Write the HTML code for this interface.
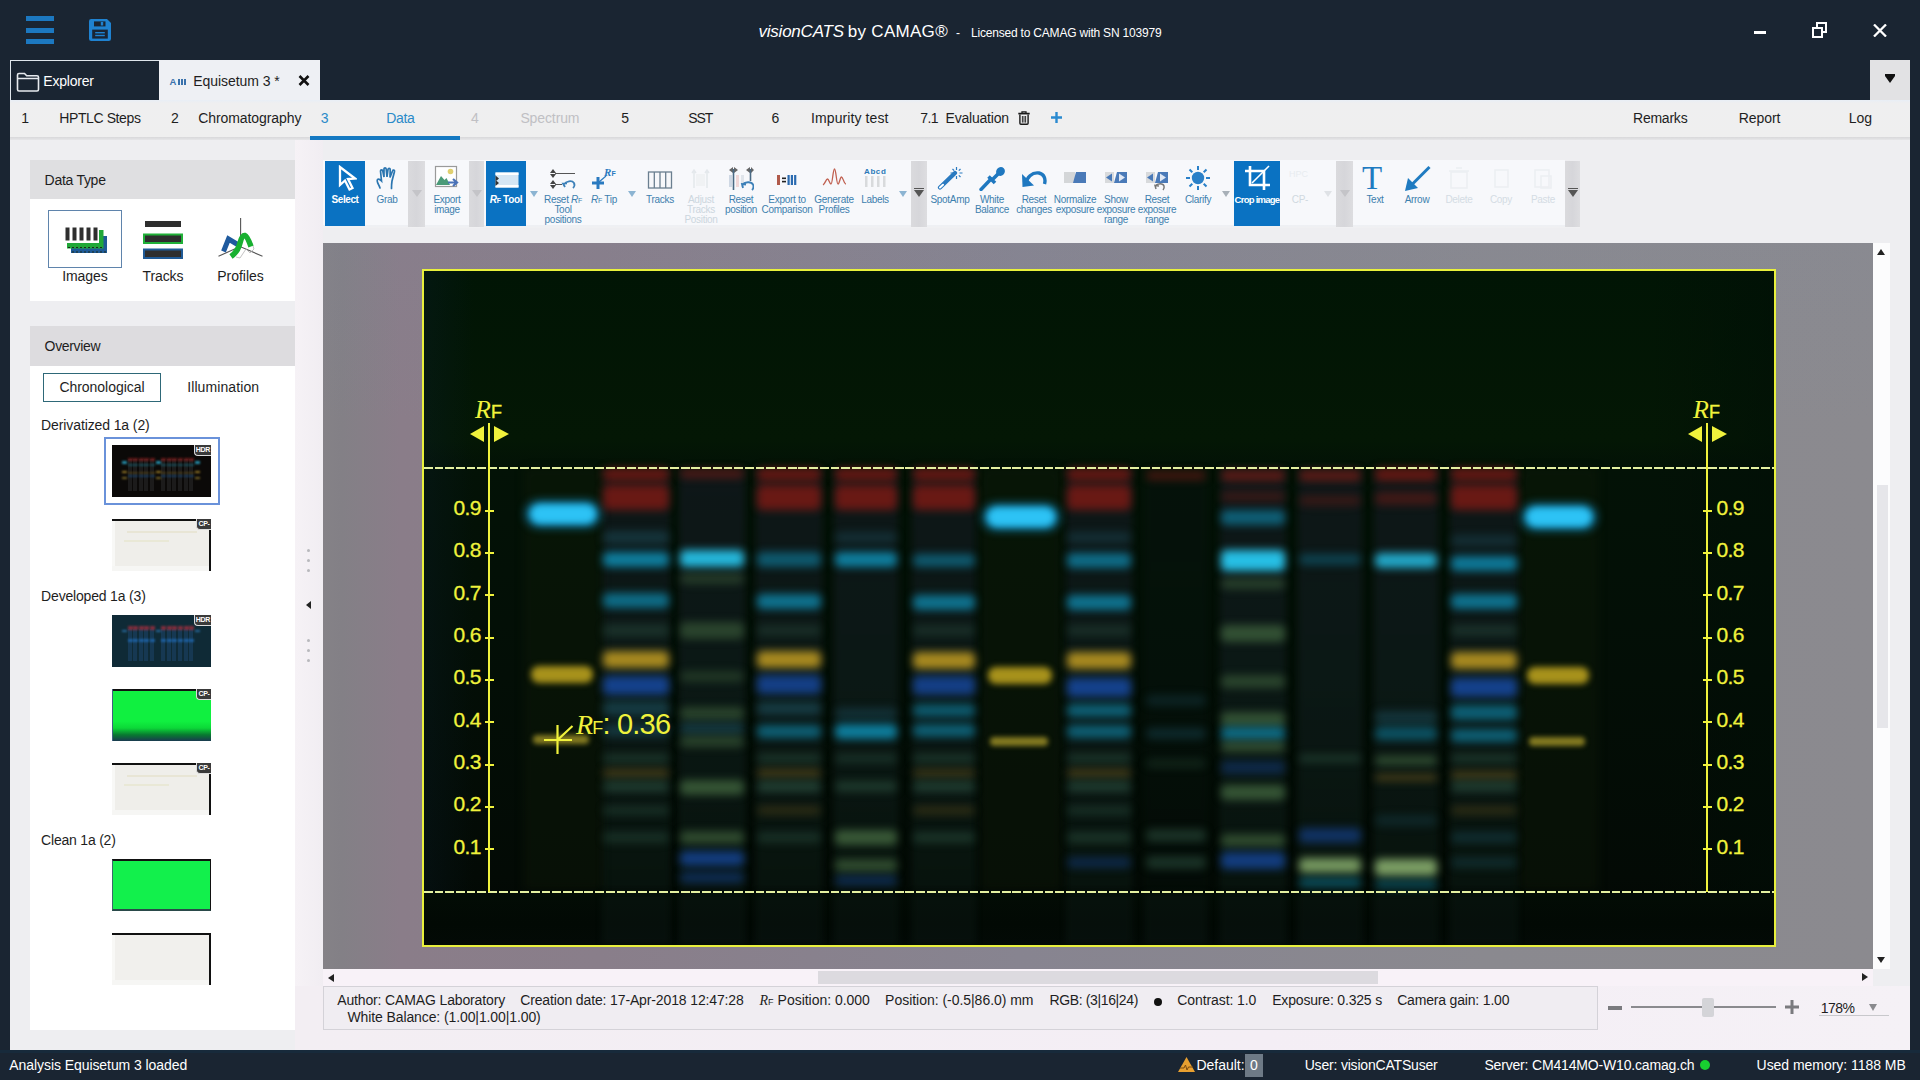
<!DOCTYPE html>
<html><head><meta charset="utf-8">
<style>
*{box-sizing:border-box;margin:0;padding:0}
html,body{width:1920px;height:1080px;overflow:hidden}
body{position:relative;background:#1a2532;font-family:"Liberation Sans",sans-serif;color:#1e1e1e}
.a{position:absolute}
.t{position:absolute;white-space:nowrap}
</style></head><body>
<div class="a" style="left:26px;top:16px;width:28px;height:5px;background:#1c78c0"></div>
<div class="a" style="left:26px;top:28px;width:28px;height:5px;background:#1c78c0"></div>
<div class="a" style="left:26px;top:39px;width:28px;height:5px;background:#1c78c0"></div>
<svg class="a" style="left:88px;top:18px" width="24" height="24" viewBox="0 0 24 24">
<path d="M3.2 1H19L23 5V20.8Q23 23 20.8 23H3.2Q1 23 1 20.8V3.2Q1 1 3.2 1Z" fill="#1f82d0"/>
<rect x="6" y="3.4" width="11.5" height="5" fill="#1a2532"/>
<rect x="12.8" y="3.9" width="2.4" height="3.6" fill="#1f82d0"/>
<rect x="4.2" y="11.6" width="15.6" height="9" fill="#1a2532"/>
<rect x="7.2" y="14" width="9.6" height="1.4" fill="#1f82d0"/><rect x="7.2" y="16.8" width="9.6" height="1.4" fill="#1f82d0"/>
</svg>
<div class="t" style="left:758.5px;top:22.5px;font-size:17px;line-height:1;letter-spacing:-0.23px;color:#fff;"><i>visionCATS</i></div>
<div class="t" style="left:847.8px;top:22.5px;font-size:17px;line-height:1;letter-spacing:0.29px;color:#fff;">by CAMAG®</div>
<div class="t" style="left:956.0px;top:26.7px;font-size:12px;line-height:1;letter-spacing:0.00px;color:#fff;">-</div>
<div class="t" style="left:971.0px;top:26.7px;font-size:12px;line-height:1;letter-spacing:-0.20px;color:#fff;">Licensed to CAMAG with SN 103979</div>
<div class="a" style="left:1754px;top:31px;width:12px;height:3px;background:#fff"></div>
<svg class="a" style="left:1812px;top:21px" width="16" height="17" viewBox="0 0 16 17">
<rect x="1" y="7" width="9" height="9" fill="none" stroke="#fff" stroke-width="2"/>
<path d="M5 6V2H14V11H11" fill="none" stroke="#fff" stroke-width="2"/></svg>
<svg class="a" style="left:1873px;top:24px" width="14" height="13" viewBox="0 0 14 13">
<path d="M1 0.5L13 12.5M13 0.5L1 12.5" stroke="#fff" stroke-width="2.3"/></svg>
<div class="a" style="left:10px;top:60px;width:149px;height:40px;background:#1a2532;border-top:1px solid #dfe6ec;border-left:1px solid #dfe6ec"></div>
<svg class="a" style="left:16px;top:72px" width="24" height="20" viewBox="0 0 24 20">
<path d="M1.5 17.5V3q0-1.5 1.5-1.5h5.5l2.2 2.3h10.3q1.5 0 1.5 1.5v12.2q0 1.5-1.5 1.5H3q-1.5 0-1.5-1.5zM1.5 6.5h20.5" fill="none" stroke="#e6eaee" stroke-width="1.6"/></svg>
<div class="t" style="left:43.3px;top:73.7px;font-size:14px;line-height:1;letter-spacing:-0.20px;color:#fff;">Explorer</div>
<div class="a" style="left:159px;top:60px;width:161px;height:40px;background:#eef0f4"></div>
<svg class="a" style="left:169px;top:77px" width="18" height="9" viewBox="0 0 18 9"><text x="0.5" y="8" font-family="Liberation Sans" font-weight="bold" font-size="9.5" fill="#3a72ac">A</text><rect x="9" y="2" width="2" height="6" fill="#3a72ac"/><rect x="12" y="2" width="2" height="6" fill="#3a72ac"/><rect x="15" y="2" width="2" height="6" fill="#3a72ac"/></svg>
<div class="t" style="left:193.3px;top:73.7px;font-size:14px;line-height:1;letter-spacing:-0.07px;color:#1e1e1e;">Equisetum 3 *</div>
<svg class="a" style="left:298px;top:75px" width="12" height="11" viewBox="0 0 12 11"><path d="M1.5 1L10.5 10M10.5 1L1.5 10" stroke="#111" stroke-width="2.6"/></svg>
<div class="a" style="left:1870px;top:60px;width:40px;height:40px;background:#e2e2e4"></div>
<div class="a" style="left:1885px;top:74px;width:10px;height:1.5px;background:#111"></div>
<div class="a" style="left:1885px;top:76px;width:0;height:0;border-left:5px solid transparent;border-right:5px solid transparent;border-top:7px solid #111"></div>
<div class="a" style="left:10px;top:100px;width:1900px;height:950px;background:#eeeef1"></div>
<div class="a" style="left:10px;top:100px;width:1900px;height:37px;background:linear-gradient(180deg,#e8eef6 0,#efeff0 3px,#efefef 100%)"></div>
<div class="a" style="left:295px;top:140px;width:28px;height:910px;background:linear-gradient(90deg,#f6f2f6,#f1edf2)"></div>
<div class="a" style="left:295px;top:986px;width:1615px;height:64px;background:linear-gradient(90deg,#f3eef3,#f4eef5 60%,#f5f1f6)"></div>
<div class="a" style="left:10px;top:137px;width:1900px;height:3px;background:linear-gradient(180deg,#d8d8da,#e6e6e8)"></div>
<div class="a" style="left:310px;top:136px;width:150px;height:4px;background:#1479c2"></div>
<div class="t" style="left:21.3px;top:110.8px;font-size:14px;line-height:1;letter-spacing:-1.58px;color:#1e1e1e;">1</div>
<div class="t" style="left:59.3px;top:110.8px;font-size:14px;line-height:1;letter-spacing:-0.40px;color:#1e1e1e;">HPTLC Steps</div>
<div class="t" style="left:171.0px;top:110.8px;font-size:14px;line-height:1;letter-spacing:-0.08px;color:#1e1e1e;">2</div>
<div class="t" style="left:198.3px;top:110.8px;font-size:14px;line-height:1;letter-spacing:-0.09px;color:#1e1e1e;">Chromatography</div>
<div class="t" style="left:320.8px;top:110.8px;font-size:14px;line-height:1;letter-spacing:-0.28px;color:#2a8ac8;">3</div>
<div class="t" style="left:386.3px;top:110.8px;font-size:14px;line-height:1;letter-spacing:-0.39px;color:#2a8ac8;">Data</div>
<div class="t" style="left:470.9px;top:110.8px;font-size:14px;line-height:1;letter-spacing:0.12px;color:#c0c0c4;">4</div>
<div class="t" style="left:520.4px;top:110.8px;font-size:14px;line-height:1;letter-spacing:-0.11px;color:#c0c0c4;">Spectrum</div>
<div class="t" style="left:621.3px;top:110.8px;font-size:14px;line-height:1;letter-spacing:-0.28px;color:#1e1e1e;">5</div>
<div class="t" style="left:688.2px;top:110.8px;font-size:14px;line-height:1;letter-spacing:-1.01px;color:#1e1e1e;">SST</div>
<div class="t" style="left:771.4px;top:110.8px;font-size:14px;line-height:1;letter-spacing:-0.68px;color:#1e1e1e;">6</div>
<div class="t" style="left:811.0px;top:110.8px;font-size:14px;line-height:1;letter-spacing:0.10px;color:#1e1e1e;">Impurity test</div>
<div class="t" style="left:920.2px;top:110.8px;font-size:14px;line-height:1;letter-spacing:-0.55px;color:#1e1e1e;">7.1</div>
<div class="t" style="left:945.5px;top:110.8px;font-size:14px;line-height:1;letter-spacing:-0.20px;color:#1e1e1e;">Evaluation</div>
<svg class="a" style="left:1018px;top:111px" width="12" height="14" viewBox="0 0 12 14">
<path d="M4 2.2V0.9H8V2.2" fill="none" stroke="#1a1a1a" stroke-width="1.3"/>
<path d="M0.3 2.6H11.7" stroke="#1a1a1a" stroke-width="1.7"/>
<path d="M1.9 3.6V12.3Q1.9 13.3 2.9 13.3H9.1Q10.1 13.3 10.1 12.3V3.6" fill="none" stroke="#1a1a1a" stroke-width="1.4"/>
<path d="M4.4 5V11.6M6 5V11.6M7.6 5V11.6" stroke="#1a1a1a" stroke-width="0.9"/></svg>
<svg class="a" style="left:1050px;top:111px" width="13" height="13" viewBox="0 0 13 13"><path d="M6.5 1V12M1 6.5H12" stroke="#2a8ad0" stroke-width="2.4"/></svg>
<div class="t" style="left:1633.0px;top:110.8px;font-size:14px;line-height:1;letter-spacing:-0.23px;color:#1e1e1e;">Remarks</div>
<div class="t" style="left:1738.8px;top:110.8px;font-size:14px;line-height:1;letter-spacing:-0.07px;color:#1e1e1e;">Report</div>
<div class="t" style="left:1848.7px;top:110.8px;font-size:14px;line-height:1;letter-spacing:-0.01px;color:#1e1e1e;">Log</div>
<div class="a" style="left:30px;top:160px;width:265px;height:39px;background:#dfdfe1"></div>
<div class="t" style="left:44.6px;top:172.7px;font-size:14px;line-height:1;letter-spacing:-0.28px;color:#1e1e1e;">Data Type</div>
<div class="a" style="left:30px;top:199px;width:265px;height:102px;background:#fff"></div>
<div class="a" style="left:48px;top:210px;width:74px;height:58px;border:1px solid #5f84ac"></div>
<div class="t" style="left:62.2px;top:268.7px;font-size:14px;line-height:1;letter-spacing:-0.08px;color:#1e1e1e;">Images</div>
<div class="t" style="left:142.6px;top:268.7px;font-size:14px;line-height:1;letter-spacing:-0.13px;color:#1e1e1e;">Tracks</div>
<div class="t" style="left:217.3px;top:268.7px;font-size:14px;line-height:1;letter-spacing:-0.03px;color:#1e1e1e;">Profiles</div>
<div class="a" style="left:30px;top:326px;width:265px;height:40px;background:#dddcdf"></div>
<div class="t" style="left:44.6px;top:339.3px;font-size:14px;line-height:1;letter-spacing:-0.33px;color:#1e1e1e;">Overview</div>
<div class="a" style="left:30px;top:366px;width:265px;height:664px;background:#fff"></div>
<div class="a" style="left:43px;top:373px;width:118px;height:29px;border:1.3px solid #2e6878"></div>
<div class="t" style="left:59.4px;top:380.0px;font-size:14px;line-height:1;letter-spacing:-0.04px;color:#1e1e1e;">Chronological</div>
<div class="t" style="left:187.2px;top:380.0px;font-size:14px;line-height:1;letter-spacing:0.10px;color:#1e1e1e;">Illumination</div>
<div class="t" style="left:41.1px;top:417.8px;font-size:14px;line-height:1;letter-spacing:-0.11px;color:#1e1e1e;">Derivatized 1a (2)</div>
<div class="t" style="left:41.1px;top:588.8px;font-size:14px;line-height:1;letter-spacing:-0.18px;color:#1e1e1e;">Developed 1a (3)</div>
<div class="t" style="left:41.1px;top:832.9px;font-size:14px;line-height:1;letter-spacing:-0.21px;color:#1e1e1e;">Clean 1a (2)</div>
<svg class="a" style="left:60px;top:222px" width="52" height="36" viewBox="60 222 52 36">
<rect x="71" y="236" width="36" height="17" fill="#1f5a96"/>
<rect x="67" y="230" width="36.5" height="18.5" fill="#20a838"/>
<rect x="65" y="227" width="34" height="16" fill="#fff"/>
<path d="M68 247.5H103M72 252H106" stroke="#1a2a1a" stroke-width="1" stroke-dasharray="2 2"/>
<rect x="65.5" y="227.5" width="4" height="13" fill="#2e2e2e"/>
<rect x="72.5" y="227.5" width="4" height="13" fill="#2e2e2e"/>
<rect x="79.5" y="227.5" width="4" height="13" fill="#2e2e2e"/>
<rect x="86.5" y="227.5" width="4" height="13" fill="#2e2e2e"/>
<rect x="93.5" y="227.5" width="4" height="13" fill="#2e2e2e"/>
</svg>
<svg class="a" style="left:140px;top:218px" width="46" height="44" viewBox="140 218 46 44">
<rect x="145" y="221" width="36" height="6" fill="#2e2e2e"/>
<rect x="143" y="233.5" width="40" height="10.5" fill="#20b038"/>
<rect x="145" y="235.5" width="36" height="6.5" fill="#2e2e2e"/>
<rect x="143" y="248.5" width="40" height="10.5" fill="#1f5a96"/>
<rect x="145" y="250.5" width="36" height="6.5" fill="#2e2e2e"/>
</svg>
<svg class="a" style="left:214px;top:214px" width="52" height="48" viewBox="214 214 52 48">
<path d="M240.6 218V246M218.5 256.3L240 246.5L262.5 256.3" fill="none" stroke="#555" stroke-width="1.1"/>
<path d="M248 247 L252 243 L254 249 L250 253 L246 249 L240 258 L236 257" fill="none" stroke="#aaa" stroke-width="0.7"/>
<path d="M223.5 251.5 L228.5 239 L238.5 245" fill="none" stroke="#1f5a9e" stroke-width="5" stroke-linejoin="miter"/>
<path d="M231 256.5 C236 253 238.5 249 240 243 C241.5 237 243 235 245 235.5 C247 236 249 241 251 246.5" fill="none" stroke="#18b030" stroke-width="5.5" stroke-linejoin="round"/>
</svg>
<div class="a" style="left:307px;top:549px;width:3px;height:3px;border-radius:50%;background:#b8b8bc"></div>
<div class="a" style="left:307px;top:559px;width:3px;height:3px;border-radius:50%;background:#b8b8bc"></div>
<div class="a" style="left:307px;top:569px;width:3px;height:3px;border-radius:50%;background:#b8b8bc"></div>
<div class="a" style="left:307px;top:639px;width:3px;height:3px;border-radius:50%;background:#b8b8bc"></div>
<div class="a" style="left:307px;top:649px;width:3px;height:3px;border-radius:50%;background:#b8b8bc"></div>
<div class="a" style="left:307px;top:659px;width:3px;height:3px;border-radius:50%;background:#b8b8bc"></div>
<div class="a" style="left:306px;top:601px;width:0;height:0;border-top:4px solid transparent;border-bottom:4px solid transparent;border-right:5px solid #222"></div>
<div class="a" style="left:104px;top:437px;width:116px;height:68px;border:2px solid #6a92da"></div>
<div class="a" style="left:112px;top:445px;width:99px;height:52px;background:#0b0908;overflow:hidden">
<div class="a" style="left:15.6px;top:14px;width:4px;height:32px;background:rgba(40,40,40,.6);filter:blur(0.6px)"></div>
<div class="a" style="left:21.2px;top:14px;width:4px;height:32px;background:rgba(40,40,40,.6);filter:blur(0.6px)"></div>
<div class="a" style="left:26.8px;top:14px;width:4px;height:32px;background:rgba(40,40,40,.6);filter:blur(0.6px)"></div>
<div class="a" style="left:32.4px;top:14px;width:4px;height:32px;background:rgba(40,40,40,.6);filter:blur(0.6px)"></div>
<div class="a" style="left:38.0px;top:14px;width:4px;height:32px;background:rgba(40,40,40,.6);filter:blur(0.6px)"></div>
<div class="a" style="left:49.2px;top:14px;width:4px;height:32px;background:rgba(40,40,40,.6);filter:blur(0.6px)"></div>
<div class="a" style="left:54.8px;top:14px;width:4px;height:32px;background:rgba(40,40,40,.6);filter:blur(0.6px)"></div>
<div class="a" style="left:60.4px;top:14px;width:4px;height:32px;background:rgba(40,40,40,.6);filter:blur(0.6px)"></div>
<div class="a" style="left:66.0px;top:14px;width:4px;height:32px;background:rgba(40,40,40,.6);filter:blur(0.6px)"></div>
<div class="a" style="left:71.6px;top:14px;width:4px;height:32px;background:rgba(40,40,40,.6);filter:blur(0.6px)"></div>
<div class="a" style="left:77.2px;top:14px;width:4px;height:32px;background:rgba(40,40,40,.6);filter:blur(0.6px)"></div>
<div class="a" style="left:10.0px;top:16px;width:5px;height:2.5px;background:#30c0e8;opacity:.7;filter:blur(0.9px)"></div>
<div class="a" style="left:10.0px;top:26px;width:5px;height:2px;background:#c8a030;opacity:.7;filter:blur(0.9px)"></div>
<div class="a" style="left:10.0px;top:32px;width:5px;height:1.5px;background:#a08830;opacity:.7;filter:blur(0.9px)"></div>
<div class="a" style="left:15.6px;top:13px;width:5px;height:3px;background:#8a2020;opacity:.7;filter:blur(0.9px)"></div>
<div class="a" style="left:15.6px;top:19px;width:5px;height:2px;background:#186070;opacity:.7;filter:blur(0.9px)"></div>
<div class="a" style="left:15.6px;top:27px;width:5px;height:2px;background:#5a4818;opacity:.7;filter:blur(0.9px)"></div>
<div class="a" style="left:15.6px;top:30px;width:5px;height:2px;background:#184878;opacity:.7;filter:blur(0.9px)"></div>
<div class="a" style="left:21.2px;top:13px;width:5px;height:3px;background:#8a2020;opacity:.7;filter:blur(0.9px)"></div>
<div class="a" style="left:21.2px;top:19px;width:5px;height:2px;background:#186070;opacity:.7;filter:blur(0.9px)"></div>
<div class="a" style="left:21.2px;top:27px;width:5px;height:2px;background:#5a4818;opacity:.7;filter:blur(0.9px)"></div>
<div class="a" style="left:21.2px;top:30px;width:5px;height:2px;background:#184878;opacity:.7;filter:blur(0.9px)"></div>
<div class="a" style="left:26.799999999999997px;top:13px;width:5px;height:3px;background:#8a2020;opacity:.7;filter:blur(0.9px)"></div>
<div class="a" style="left:26.799999999999997px;top:19px;width:5px;height:2px;background:#186070;opacity:.7;filter:blur(0.9px)"></div>
<div class="a" style="left:26.799999999999997px;top:27px;width:5px;height:2px;background:#5a4818;opacity:.7;filter:blur(0.9px)"></div>
<div class="a" style="left:26.799999999999997px;top:30px;width:5px;height:2px;background:#184878;opacity:.7;filter:blur(0.9px)"></div>
<div class="a" style="left:32.4px;top:13px;width:5px;height:3px;background:#8a2020;opacity:.7;filter:blur(0.9px)"></div>
<div class="a" style="left:32.4px;top:19px;width:5px;height:2px;background:#186070;opacity:.7;filter:blur(0.9px)"></div>
<div class="a" style="left:32.4px;top:27px;width:5px;height:2px;background:#5a4818;opacity:.7;filter:blur(0.9px)"></div>
<div class="a" style="left:32.4px;top:30px;width:5px;height:2px;background:#184878;opacity:.7;filter:blur(0.9px)"></div>
<div class="a" style="left:38.0px;top:13px;width:5px;height:3px;background:#8a2020;opacity:.7;filter:blur(0.9px)"></div>
<div class="a" style="left:38.0px;top:19px;width:5px;height:2px;background:#186070;opacity:.7;filter:blur(0.9px)"></div>
<div class="a" style="left:38.0px;top:27px;width:5px;height:2px;background:#5a4818;opacity:.7;filter:blur(0.9px)"></div>
<div class="a" style="left:38.0px;top:30px;width:5px;height:2px;background:#184878;opacity:.7;filter:blur(0.9px)"></div>
<div class="a" style="left:43.599999999999994px;top:16px;width:5px;height:2.5px;background:#30c0e8;opacity:.7;filter:blur(0.9px)"></div>
<div class="a" style="left:43.599999999999994px;top:26px;width:5px;height:2px;background:#c8a030;opacity:.7;filter:blur(0.9px)"></div>
<div class="a" style="left:43.599999999999994px;top:32px;width:5px;height:1.5px;background:#a08830;opacity:.7;filter:blur(0.9px)"></div>
<div class="a" style="left:49.199999999999996px;top:13px;width:5px;height:3px;background:#8a2020;opacity:.7;filter:blur(0.9px)"></div>
<div class="a" style="left:49.199999999999996px;top:19px;width:5px;height:2px;background:#186070;opacity:.7;filter:blur(0.9px)"></div>
<div class="a" style="left:49.199999999999996px;top:27px;width:5px;height:2px;background:#5a4818;opacity:.7;filter:blur(0.9px)"></div>
<div class="a" style="left:49.199999999999996px;top:30px;width:5px;height:2px;background:#184878;opacity:.7;filter:blur(0.9px)"></div>
<div class="a" style="left:54.8px;top:13px;width:5px;height:3px;background:#8a2020;opacity:.7;filter:blur(0.9px)"></div>
<div class="a" style="left:54.8px;top:19px;width:5px;height:2px;background:#186070;opacity:.7;filter:blur(0.9px)"></div>
<div class="a" style="left:54.8px;top:27px;width:5px;height:2px;background:#5a4818;opacity:.7;filter:blur(0.9px)"></div>
<div class="a" style="left:54.8px;top:30px;width:5px;height:2px;background:#184878;opacity:.7;filter:blur(0.9px)"></div>
<div class="a" style="left:60.4px;top:13px;width:5px;height:3px;background:#8a2020;opacity:.7;filter:blur(0.9px)"></div>
<div class="a" style="left:60.4px;top:19px;width:5px;height:2px;background:#186070;opacity:.7;filter:blur(0.9px)"></div>
<div class="a" style="left:60.4px;top:27px;width:5px;height:2px;background:#5a4818;opacity:.7;filter:blur(0.9px)"></div>
<div class="a" style="left:60.4px;top:30px;width:5px;height:2px;background:#184878;opacity:.7;filter:blur(0.9px)"></div>
<div class="a" style="left:66.0px;top:13px;width:5px;height:3px;background:#8a2020;opacity:.7;filter:blur(0.9px)"></div>
<div class="a" style="left:66.0px;top:19px;width:5px;height:2px;background:#186070;opacity:.7;filter:blur(0.9px)"></div>
<div class="a" style="left:66.0px;top:27px;width:5px;height:2px;background:#5a4818;opacity:.7;filter:blur(0.9px)"></div>
<div class="a" style="left:66.0px;top:30px;width:5px;height:2px;background:#184878;opacity:.7;filter:blur(0.9px)"></div>
<div class="a" style="left:71.6px;top:13px;width:5px;height:3px;background:#8a2020;opacity:.7;filter:blur(0.9px)"></div>
<div class="a" style="left:71.6px;top:19px;width:5px;height:2px;background:#186070;opacity:.7;filter:blur(0.9px)"></div>
<div class="a" style="left:71.6px;top:27px;width:5px;height:2px;background:#5a4818;opacity:.7;filter:blur(0.9px)"></div>
<div class="a" style="left:71.6px;top:30px;width:5px;height:2px;background:#184878;opacity:.7;filter:blur(0.9px)"></div>
<div class="a" style="left:77.19999999999999px;top:13px;width:5px;height:3px;background:#8a2020;opacity:.7;filter:blur(0.9px)"></div>
<div class="a" style="left:77.19999999999999px;top:19px;width:5px;height:2px;background:#186070;opacity:.7;filter:blur(0.9px)"></div>
<div class="a" style="left:77.19999999999999px;top:27px;width:5px;height:2px;background:#5a4818;opacity:.7;filter:blur(0.9px)"></div>
<div class="a" style="left:77.19999999999999px;top:30px;width:5px;height:2px;background:#184878;opacity:.7;filter:blur(0.9px)"></div>
<div class="a" style="left:82.8px;top:16px;width:5px;height:2.5px;background:#30c0e8;opacity:.7;filter:blur(0.9px)"></div>
<div class="a" style="left:82.8px;top:26px;width:5px;height:2px;background:#c8a030;opacity:.7;filter:blur(0.9px)"></div>
<div class="a" style="left:82.8px;top:32px;width:5px;height:1.5px;background:#a08830;opacity:.7;filter:blur(0.9px)"></div>
</div>
<div class="a" style="left:194px;top:445px;width:17px;height:11px;background:#3a3a3a;border-bottom-left-radius:4px;border:1px solid #ddd;border-top:none;border-right:none;color:#fff;font-size:7px;font-weight:bold;line-height:10px;text-align:center;letter-spacing:-0.3px">HDR</div>
<div class="a" style="left:112px;top:519px;width:99px;height:52px;background:#efeeea;border-top:2px solid #111;border-right:2px solid #111;"></div>
<div class="a" style="left:112px;top:521px;width:3px;height:50px;background:#f8f8f6"></div>
<div class="a" style="left:112px;top:566px;width:97px;height:5px;background:#f6f6f4"></div>
<div class="a" style="left:127px;top:531px;width:70px;height:2px;background:rgba(200,190,120,.18);filter:blur(0.5px)"></div>
<div class="a" style="left:124px;top:540px;width:45px;height:2px;background:rgba(200,200,100,.15);filter:blur(0.5px)"></div>
<div class="a" style="left:196px;top:519px;width:15px;height:11px;background:#3a3a3a;border-bottom-left-radius:4px;border:1px solid #ddd;border-top:none;border-right:none;color:#fff;font-size:7px;font-weight:bold;line-height:10px;text-align:center;letter-spacing:-0.3px">CP-</div>
<div class="a" style="left:112px;top:615px;width:99px;height:52px;background:#0f2a36;overflow:hidden">
<div class="a" style="left:15.6px;top:14px;width:4px;height:32px;background:rgba(30,70,110,.5);filter:blur(0.6px)"></div>
<div class="a" style="left:21.2px;top:14px;width:4px;height:32px;background:rgba(30,70,110,.5);filter:blur(0.6px)"></div>
<div class="a" style="left:26.8px;top:14px;width:4px;height:32px;background:rgba(30,70,110,.5);filter:blur(0.6px)"></div>
<div class="a" style="left:32.4px;top:14px;width:4px;height:32px;background:rgba(30,70,110,.5);filter:blur(0.6px)"></div>
<div class="a" style="left:38.0px;top:14px;width:4px;height:32px;background:rgba(30,70,110,.5);filter:blur(0.6px)"></div>
<div class="a" style="left:49.2px;top:14px;width:4px;height:32px;background:rgba(30,70,110,.5);filter:blur(0.6px)"></div>
<div class="a" style="left:54.8px;top:14px;width:4px;height:32px;background:rgba(30,70,110,.5);filter:blur(0.6px)"></div>
<div class="a" style="left:60.4px;top:14px;width:4px;height:32px;background:rgba(30,70,110,.5);filter:blur(0.6px)"></div>
<div class="a" style="left:66.0px;top:14px;width:4px;height:32px;background:rgba(30,70,110,.5);filter:blur(0.6px)"></div>
<div class="a" style="left:71.6px;top:14px;width:4px;height:32px;background:rgba(30,70,110,.5);filter:blur(0.6px)"></div>
<div class="a" style="left:77.2px;top:14px;width:4px;height:32px;background:rgba(30,70,110,.5);filter:blur(0.6px)"></div>
<div class="a" style="left:10.0px;top:15px;width:5px;height:1.5px;background:#3080c0;opacity:.7;filter:blur(0.9px)"></div>
<div class="a" style="left:15.6px;top:11px;width:5px;height:4px;background:#b03040;opacity:.7;filter:blur(0.9px)"></div>
<div class="a" style="left:15.6px;top:24px;width:5px;height:3px;background:#2070c0;opacity:.7;filter:blur(0.9px)"></div>
<div class="a" style="left:21.2px;top:11px;width:5px;height:4px;background:#b03040;opacity:.7;filter:blur(0.9px)"></div>
<div class="a" style="left:21.2px;top:24px;width:5px;height:3px;background:#2070c0;opacity:.7;filter:blur(0.9px)"></div>
<div class="a" style="left:26.799999999999997px;top:11px;width:5px;height:4px;background:#b03040;opacity:.7;filter:blur(0.9px)"></div>
<div class="a" style="left:26.799999999999997px;top:24px;width:5px;height:3px;background:#2070c0;opacity:.7;filter:blur(0.9px)"></div>
<div class="a" style="left:32.4px;top:11px;width:5px;height:4px;background:#b03040;opacity:.7;filter:blur(0.9px)"></div>
<div class="a" style="left:32.4px;top:24px;width:5px;height:3px;background:#2070c0;opacity:.7;filter:blur(0.9px)"></div>
<div class="a" style="left:38.0px;top:11px;width:5px;height:4px;background:#b03040;opacity:.7;filter:blur(0.9px)"></div>
<div class="a" style="left:38.0px;top:24px;width:5px;height:3px;background:#2070c0;opacity:.7;filter:blur(0.9px)"></div>
<div class="a" style="left:43.599999999999994px;top:15px;width:5px;height:1.5px;background:#3080c0;opacity:.7;filter:blur(0.9px)"></div>
<div class="a" style="left:49.199999999999996px;top:11px;width:5px;height:4px;background:#b03040;opacity:.7;filter:blur(0.9px)"></div>
<div class="a" style="left:49.199999999999996px;top:24px;width:5px;height:3px;background:#2070c0;opacity:.7;filter:blur(0.9px)"></div>
<div class="a" style="left:54.8px;top:11px;width:5px;height:4px;background:#b03040;opacity:.7;filter:blur(0.9px)"></div>
<div class="a" style="left:54.8px;top:24px;width:5px;height:3px;background:#2070c0;opacity:.7;filter:blur(0.9px)"></div>
<div class="a" style="left:60.4px;top:11px;width:5px;height:4px;background:#b03040;opacity:.7;filter:blur(0.9px)"></div>
<div class="a" style="left:60.4px;top:24px;width:5px;height:3px;background:#2070c0;opacity:.7;filter:blur(0.9px)"></div>
<div class="a" style="left:66.0px;top:11px;width:5px;height:4px;background:#b03040;opacity:.7;filter:blur(0.9px)"></div>
<div class="a" style="left:66.0px;top:24px;width:5px;height:3px;background:#2070c0;opacity:.7;filter:blur(0.9px)"></div>
<div class="a" style="left:71.6px;top:11px;width:5px;height:4px;background:#b03040;opacity:.7;filter:blur(0.9px)"></div>
<div class="a" style="left:71.6px;top:24px;width:5px;height:3px;background:#2070c0;opacity:.7;filter:blur(0.9px)"></div>
<div class="a" style="left:77.19999999999999px;top:11px;width:5px;height:4px;background:#b03040;opacity:.7;filter:blur(0.9px)"></div>
<div class="a" style="left:77.19999999999999px;top:24px;width:5px;height:3px;background:#2070c0;opacity:.7;filter:blur(0.9px)"></div>
<div class="a" style="left:82.8px;top:15px;width:5px;height:1.5px;background:#3080c0;opacity:.7;filter:blur(0.9px)"></div>
</div>
<div class="a" style="left:194px;top:615px;width:17px;height:11px;background:#3a3a3a;border-bottom-left-radius:4px;border:1px solid #ddd;border-top:none;border-right:none;color:#fff;font-size:7px;font-weight:bold;line-height:10px;text-align:center;letter-spacing:-0.3px">HDR</div>
<div class="a" style="left:112px;top:689px;width:99px;height:52px;background:linear-gradient(180deg,#111 0,#111 2px,#10f040 2px,#10f040 62%,#0cd838 75%,#087a30 88%,#1a3a50 100%);border-left:1px solid #406080"></div>
<div class="a" style="left:196px;top:689px;width:15px;height:11px;background:#3a3a3a;border-bottom-left-radius:4px;border:1px solid #ddd;border-top:none;border-right:none;color:#fff;font-size:7px;font-weight:bold;line-height:10px;text-align:center;letter-spacing:-0.3px">CP-</div>
<div class="a" style="left:112px;top:763px;width:99px;height:52px;background:#efeeea;border-top:2px solid #111;border-right:2px solid #111;"></div>
<div class="a" style="left:112px;top:765px;width:3px;height:50px;background:#f8f8f6"></div>
<div class="a" style="left:112px;top:810px;width:97px;height:5px;background:#f6f6f4"></div>
<div class="a" style="left:127px;top:775px;width:70px;height:2px;background:rgba(200,190,120,.18);filter:blur(0.5px)"></div>
<div class="a" style="left:124px;top:784px;width:45px;height:2px;background:rgba(200,200,100,.15);filter:blur(0.5px)"></div>
<div class="a" style="left:196px;top:763px;width:15px;height:11px;background:#3a3a3a;border-bottom-left-radius:4px;border:1px solid #ddd;border-top:none;border-right:none;color:#fff;font-size:7px;font-weight:bold;line-height:10px;text-align:center;letter-spacing:-0.3px">CP-</div>
<div class="a" style="left:112px;top:859px;width:99px;height:52px;background:#12f04c;border-top:2px solid #111;border-left:1px solid #3a6a6a;border-right:1px solid #111;border-bottom:2px solid #2a4a4a"></div>
<div class="a" style="left:112px;top:933px;width:99px;height:52px;background:#f1f0ed;border-top:2px solid #111;border-right:2px solid #111;"></div>
<div class="a" style="left:112px;top:935px;width:3px;height:50px;background:#f8f8f6"></div>
<div class="a" style="left:112px;top:980px;width:97px;height:5px;background:#f6f6f4"></div>
<div class="a" style="left:323px;top:160px;width:1242px;height:67px;background:#f7f8fb"></div>
<div class="a" style="left:323px;top:225px;width:1257px;height:3px;background:linear-gradient(#eef0f4,#f0f0f2)"></div>
<div class="a" style="left:325px;top:161px;width:40px;height:65px;background:#0a72c2"></div>
<svg class="a" style="left:337px;top:165px" width="20" height="28" viewBox="0 0 20 28"><path d="M3 2 L3 20 L8 15.5 L12.5 24.5 L15.5 23 L11 14 L18 13.5 Z" fill="none" stroke="#fff" stroke-width="2.3" stroke-linejoin="miter"/></svg>
<div class="t" style="left:305.0px;width:80px;top:194px;font-size:10px;line-height:11px;text-align:center;color:#fff;letter-spacing:-0.4px;font-weight:bold;">Select</div>
<svg class="a" style="left:375px;top:166px" width="24" height="24" viewBox="0 0 24 24"><path d="M5 22 C4 19 1 15 2.5 13.5 C4 12.5 5.5 14 6.5 15 L5.5 5 C5.5 3.5 7.5 3.5 7.8 5 L9 11 L9 3 C9 1.5 11 1.5 11.2 3 L12 11 L13 3.5 C13.2 2 15.2 2 15.2 3.5 L15 11.5 L17.5 5 C18 3.6 19.8 4 19.5 5.5 L17 15 C16.5 18 16.5 20 16.5 22.5" fill="none" stroke="#2a75b0" stroke-width="1.7" stroke-linecap="round"/></svg>
<div class="t" style="left:347.0px;width:80px;top:194px;font-size:10px;line-height:11px;text-align:center;color:#3d7fae;letter-spacing:-0.3px;">Grab</div>
<div class="a" style="left:408px;top:161px;width:17px;height:66px;background:linear-gradient(90deg,#dadadd,#d6d6da 50%,#dddde0)"></div>
<div class="a" style="left:411.5px;top:190px;width:0;height:0;border-left:5px solid transparent;border-right:5px solid transparent;border-top:7px solid #c4c4c8"></div>
<svg class="a" style="left:433px;top:165px" width="28" height="26" viewBox="0 0 28 26"><rect x="2.5" y="1.5" width="21" height="20" fill="#fff" stroke="#9a9a9a" stroke-width="1.2"/><circle cx="17.5" cy="6.5" r="2.8" fill="#e0d070"/><path d="M3 20 L8 11 L11.5 15 L13.5 13 L17 20 Z" fill="#4a9a78"/><path d="M15 17.5h8M20 14l4 3.5-4 3.5" fill="none" stroke="#4a72b8" stroke-width="2.2"/></svg>
<div class="t" style="left:407.0px;width:80px;top:194px;font-size:10px;line-height:11px;text-align:center;color:#3d7fae;letter-spacing:-0.3px;">Export</div>
<div class="t" style="left:407.0px;width:80px;top:204px;font-size:10px;line-height:11px;text-align:center;color:#3d7fae;letter-spacing:-0.3px;">image</div>
<div class="a" style="left:469px;top:161px;width:15px;height:66px;background:linear-gradient(90deg,#dadadd,#d6d6da 50%,#dddde0)"></div>
<div class="a" style="left:471.5px;top:190px;width:0;height:0;border-left:5px solid transparent;border-right:5px solid transparent;border-top:7px solid #c4c4c8"></div>
<div class="a" style="left:486px;top:161px;width:40px;height:65px;background:#0a72c2"></div>
<svg class="a" style="left:494px;top:171px" width="26" height="18" viewBox="0 0 26 18"><rect x="1.5" y="1.5" width="23" height="15" fill="#d4e6f4"/><rect x="1.5" y="1.5" width="23" height="2.5" fill="#fff"/><rect x="1.5" y="14" width="23" height="2.5" fill="#fff"/><path d="M1.5 4.5 L5 7.5 L1.5 10.5Z M1.5 9 L5 12 L1.5 15Z" fill="#333"/></svg>
<div class="t" style="left:466.0px;width:80px;top:194px;font-size:10px;line-height:11px;text-align:center;color:#fff;letter-spacing:-0.3px;font-weight:bold;"><i>R</i><span style="font-size:7px">F</span> Tool</div>
<div class="a" style="left:529.5px;top:191px;width:0;height:0;border-left:4.5px solid transparent;border-right:4.5px solid transparent;border-top:6px solid #8cb4d2"></div>
<svg class="a" style="left:549px;top:168px" width="28" height="23" viewBox="0 0 28 23"><path d="M4 1 L1 5 H7Z M4 10 L1 6 H7Z M4 12 L1 16 H7Z M4 21 L1 17 H7Z" fill="#444"/><path d="M6 5.5 H26 M6 16.5 H13" stroke="#555" stroke-width="1.2"/><path d="M16 19 L14 15.5 L18 15.3 M15 16.3 C17 13 23 12 25 15 C26 17 25 19 24 20" fill="none" stroke="#3c80b8" stroke-width="1.8"/></svg>
<div class="t" style="left:523.0px;width:80px;top:194px;font-size:10px;line-height:11px;text-align:center;color:#3d7fae;letter-spacing:-0.3px;">Reset <i>R</i><span style="font-size:7px">F</span></div>
<div class="t" style="left:523.0px;width:80px;top:204px;font-size:10px;line-height:11px;text-align:center;color:#3d7fae;letter-spacing:-0.3px;">Tool</div>
<div class="t" style="left:523.0px;width:80px;top:214px;font-size:10px;line-height:11px;text-align:center;color:#3d7fae;letter-spacing:-0.3px;">positions</div>
<svg class="a" style="left:590px;top:166px" width="30" height="25" viewBox="0 0 30 25"><path d="M2 17H14M8 11V23" stroke="#2a7ac0" stroke-width="3"/><path d="M9 16 L16 10" stroke="#2a7ac0" stroke-width="1.2"/><text x="14" y="9.5" font-family="Liberation Serif" font-style="italic" font-weight="bold" font-size="11" fill="#2a7ac0">R</text><text x="21.5" y="9.5" font-family="Liberation Sans" font-weight="bold" font-size="7" fill="#2a7ac0">F</text></svg>
<div class="t" style="left:564.0px;width:80px;top:194px;font-size:10px;line-height:11px;text-align:center;color:#3d7fae;letter-spacing:-0.3px;"><i>R</i><span style="font-size:7px">F</span> Tip</div>
<div class="a" style="left:627.5px;top:191px;width:0;height:0;border-left:4.5px solid transparent;border-right:4.5px solid transparent;border-top:6px solid #8cb4d2"></div>
<svg class="a" style="left:647px;top:171px" width="26" height="18" viewBox="0 0 26 18"><rect x="1.5" y="1" width="23" height="16" fill="none" stroke="#6b7f90" stroke-width="1.3"/><path d="M7.3 1V17M13 1V17M18.7 1V17" stroke="#6b7f90" stroke-width="1.3"/></svg>
<div class="t" style="left:620.0px;width:80px;top:194px;font-size:10px;line-height:11px;text-align:center;color:#3d7fae;letter-spacing:-0.3px;">Tracks</div>
<svg class="a" style="left:690px;top:168px" width="22" height="22" viewBox="0 0 22 22"><path d="M4 2V20M17 2V20M2 5L4 2 6 5M15 5L17 2 19 5" fill="none" stroke="#e4e8ec" stroke-width="1.5"/><rect x="6" y="6" width="9" height="12" fill="#f0f2f4"/></svg>
<div class="t" style="left:661.0px;width:80px;top:194px;font-size:10px;line-height:11px;text-align:center;color:#ccd6de;letter-spacing:-0.3px;">Adjust</div>
<div class="t" style="left:661.0px;width:80px;top:204px;font-size:10px;line-height:11px;text-align:center;color:#ccd6de;letter-spacing:-0.3px;">Tracks</div>
<div class="t" style="left:661.0px;width:80px;top:214px;font-size:10px;line-height:11px;text-align:center;color:#ccd6de;letter-spacing:-0.3px;">Position</div>
<svg class="a" style="left:728px;top:166px" width="26" height="25" viewBox="0 0 26 25"><path d="M1 4 L5 1 L5 7Z M10 4 L6 1 L6 7Z M18 4 L22 1 L22 7Z M26 4 L23 1 L23 7Z" fill="#666"/><path d="M5.5 3V24 M22.5 3V15" stroke="#4a6a84" stroke-width="1.6"/><rect x="1" y="9" width="3" height="12" fill="#cfd8e4"/><rect x="8" y="9" width="3" height="12" fill="#f0d8d8"/><rect x="13" y="9" width="3" height="12" fill="#dfe4ea"/><path d="M15 22 L14 18 L18 18.5 M14.5 18.5 C17 16 23 15 25 18.5 C26 21 25 23 24 24" fill="none" stroke="#3c80b8" stroke-width="1.8"/></svg>
<div class="t" style="left:701.0px;width:80px;top:194px;font-size:10px;line-height:11px;text-align:center;color:#3d7fae;letter-spacing:-0.3px;">Reset</div>
<div class="t" style="left:701.0px;width:80px;top:204px;font-size:10px;line-height:11px;text-align:center;color:#3d7fae;letter-spacing:-0.3px;">position</div>
<svg class="a" style="left:776px;top:174px" width="22" height="12" viewBox="0 0 22 12"><rect x="1" y="1" width="3" height="10" fill="#b05a4a"/><rect x="6" y="3.5" width="4" height="1.6" fill="#222"/><rect x="6" y="6.8" width="4" height="1.6" fill="#222"/><rect x="11.5" y="1" width="2.2" height="10" fill="#2a6ab0"/><rect x="14.8" y="1" width="2.2" height="10" fill="#2a6ab0"/><rect x="18.1" y="1" width="2.2" height="10" fill="#2a6ab0"/></svg>
<div class="t" style="left:747.0px;width:80px;top:194px;font-size:10px;line-height:11px;text-align:center;color:#3d7fae;letter-spacing:-0.3px;">Export to</div>
<div class="t" style="left:747.0px;width:80px;top:204px;font-size:10px;line-height:11px;text-align:center;color:#3d7fae;letter-spacing:-0.3px;">Comparison</div>
<svg class="a" style="left:822px;top:168px" width="25" height="20" viewBox="0 0 25 20"><path d="M1 17 C3 16 4 11 5.5 11 C7 11 7.5 16 9 16 C10.5 16 11 1 12.5 1 C14 1 14.5 16 16 16 C17.5 16 18 9 19.5 9 C21 9 22 16 24 16" fill="none" stroke="#c06050" stroke-width="1.3"/></svg>
<div class="t" style="left:794.0px;width:80px;top:194px;font-size:10px;line-height:11px;text-align:center;color:#3d7fae;letter-spacing:-0.3px;">Generate</div>
<div class="t" style="left:794.0px;width:80px;top:204px;font-size:10px;line-height:11px;text-align:center;color:#3d7fae;letter-spacing:-0.3px;">Profiles</div>
<svg class="a" style="left:863px;top:167px" width="24" height="21" viewBox="0 0 24 21"><text x="1" y="7" font-family="Liberation Sans" font-weight="bold" font-size="8" fill="#2a78b8" letter-spacing="0.6">Abcd</text><rect x="2" y="9" width="2.5" height="11" fill="#d8dadc"/><rect x="8" y="9" width="2.5" height="11" fill="#d8dadc"/><rect x="14" y="9" width="2.5" height="11" fill="#d8dadc"/><rect x="20" y="9" width="2.5" height="11" fill="#d8dadc"/></svg>
<div class="t" style="left:835.0px;width:80px;top:194px;font-size:10px;line-height:11px;text-align:center;color:#3d7fae;letter-spacing:-0.3px;">Labels</div>
<div class="a" style="left:898.5px;top:191px;width:0;height:0;border-left:4.5px solid transparent;border-right:4.5px solid transparent;border-top:6px solid #8cb4d2"></div>
<div class="a" style="left:911px;top:161px;width:16px;height:66px;background:linear-gradient(90deg,#dadadd,#d6d6da 50%,#dddde0)"></div>
<div class="a" style="left:914.0px;top:188px;width:10px;height:1px;background:#555"></div>
<div class="a" style="left:914.0px;top:190px;width:0;height:0;border-left:5px solid transparent;border-right:5px solid transparent;border-top:7px solid #555"></div>
<svg class="a" style="left:937px;top:166px" width="26" height="24" viewBox="0 0 26 24"><path d="M3 21.5 L18 7" stroke="#2a7ac0" stroke-width="4.2" stroke-linecap="round"/><path d="M3 21.5 L6 18.7" stroke="#fff" stroke-width="2" stroke-linecap="round"/><path d="M19.5 1V4M19.5 10V13M13.5 7H16.5M22.5 7H25.5M15.5 3L17.2 4.7M21.8 9.3L23.5 11M23.5 3L21.8 4.7M15.5 11L17.2 9.3" stroke="#2a7ac0" stroke-width="1.2"/></svg>
<div class="t" style="left:910.0px;width:80px;top:194px;font-size:10px;line-height:11px;text-align:center;color:#3d7fae;letter-spacing:-0.3px;">SpotAmp</div>
<svg class="a" style="left:979px;top:166px" width="27" height="25" viewBox="0 0 27 25"><path d="M2 23.5 L12 13" stroke="#1f78c0" stroke-width="3.4" stroke-linecap="round"/><path d="M9.5 10.5 L16 17 M13 14 L21 6" stroke="#1f78c0" stroke-width="3.6"/><ellipse cx="21.5" cy="5.5" rx="4.6" ry="4.2" transform="rotate(-45 21.5 5.5)" fill="#1f78c0"/></svg>
<div class="t" style="left:952.0px;width:80px;top:194px;font-size:10px;line-height:11px;text-align:center;color:#3d7fae;letter-spacing:-0.3px;">White</div>
<div class="t" style="left:952.0px;width:80px;top:204px;font-size:10px;line-height:11px;text-align:center;color:#3d7fae;letter-spacing:-0.3px;">Balance</div>
<svg class="a" style="left:1021px;top:171px" width="26" height="17" viewBox="0 0 26 17"><path d="M6 14.5 C4 6 12 1 18 2 C23 3 25 8 23.5 13" fill="none" stroke="#1f78c0" stroke-width="3.4"/><path d="M1 3 L1.5 16 L13 14.5 Z" fill="#1f78c0"/></svg>
<div class="t" style="left:994.0px;width:80px;top:194px;font-size:10px;line-height:11px;text-align:center;color:#3d7fae;letter-spacing:-0.3px;">Reset</div>
<div class="t" style="left:994.0px;width:80px;top:204px;font-size:10px;line-height:11px;text-align:center;color:#3d7fae;letter-spacing:-0.3px;">changes</div>
<svg class="a" style="left:1063px;top:171px" width="24" height="13" viewBox="0 0 24 13"><rect x="1" y="1" width="11" height="11" fill="#d4d6d8"/><path d="M13 1 H23 V12 H10Z" fill="#4a7ab8"/></svg>
<div class="t" style="left:1035.0px;width:80px;top:194px;font-size:10px;line-height:11px;text-align:center;color:#3d7fae;letter-spacing:-0.3px;">Normalize</div>
<div class="t" style="left:1035.0px;width:80px;top:204px;font-size:10px;line-height:11px;text-align:center;color:#3d7fae;letter-spacing:-0.3px;">exposure</div>
<svg class="a" style="left:1104px;top:171px" width="24" height="13" viewBox="0 0 24 13"><rect x="1" y="1" width="9" height="11" fill="#d8dadc"/><path d="M13 1 H23 V12 H10Z" fill="#4a7ab8"/><path d="M2 6.5 L8 2.5 V10.5Z" fill="#4a7ab8"/><path d="M21 6.5 L15 2.5 V10.5Z" fill="#e0e8f4"/></svg>
<div class="t" style="left:1076.0px;width:80px;top:194px;font-size:10px;line-height:11px;text-align:center;color:#3d7fae;letter-spacing:-0.3px;">Show</div>
<div class="t" style="left:1076.0px;width:80px;top:204px;font-size:10px;line-height:11px;text-align:center;color:#3d7fae;letter-spacing:-0.3px;">exposure</div>
<div class="t" style="left:1076.0px;width:80px;top:214px;font-size:10px;line-height:11px;text-align:center;color:#3d7fae;letter-spacing:-0.3px;">range</div>
<svg class="a" style="left:1145px;top:171px" width="24" height="20" viewBox="0 0 24 20"><rect x="1" y="1" width="9" height="11" fill="#d8dadc"/><path d="M13 1 H23 V12 H10Z" fill="#4a7ab8"/><path d="M2 6.5 L8 2.5 V10.5Z" fill="#4a7ab8"/><path d="M21 6.5 L15 2.5 V10.5Z" fill="#e0e8f4"/><path d="M11 18 L10 14.5 L14 15 M10.5 15 C12.5 12 18 12 19 15 C19.5 17 19 18 18 19" fill="none" stroke="#777" stroke-width="1.5"/></svg>
<div class="t" style="left:1117.0px;width:80px;top:194px;font-size:10px;line-height:11px;text-align:center;color:#3d7fae;letter-spacing:-0.3px;">Reset</div>
<div class="t" style="left:1117.0px;width:80px;top:204px;font-size:10px;line-height:11px;text-align:center;color:#3d7fae;letter-spacing:-0.3px;">exposure</div>
<div class="t" style="left:1117.0px;width:80px;top:214px;font-size:10px;line-height:11px;text-align:center;color:#3d7fae;letter-spacing:-0.3px;">range</div>
<svg class="a" style="left:1185px;top:165px" width="26" height="26" viewBox="0 0 26 26"><circle cx="13" cy="13" r="6.2" fill="#2a80c8"/><path d="M13 1V5M13 21V25M1 13H5M21 13H25M4.5 4.5L7.3 7.3M18.7 18.7L21.5 21.5M21.5 4.5L18.7 7.3M4.5 21.5L7.3 18.7" stroke="#2a80c8" stroke-width="2"/></svg>
<div class="t" style="left:1158.0px;width:80px;top:194px;font-size:10px;line-height:11px;text-align:center;color:#3d7fae;letter-spacing:-0.3px;">Clarify</div>
<div class="a" style="left:1221.5px;top:191px;width:0;height:0;border-left:4.5px solid transparent;border-right:4.5px solid transparent;border-top:6px solid #a8b0b8"></div>
<div class="a" style="left:1234px;top:161px;width:46px;height:65px;background:#0a72c2"></div>
<svg class="a" style="left:1244px;top:165px" width="27" height="26" viewBox="0 0 27 26"><path d="M6 1V20H26 M1 6H20V25" fill="none" stroke="#fff" stroke-width="2.6"/><path d="M8 18L25 1" stroke="#fff" stroke-width="1.6"/></svg>
<div class="t" style="left:1217.0px;width:80px;top:194px;font-size:9.5px;line-height:11px;text-align:center;color:#fff;letter-spacing:-0.75px;font-weight:bold;">Crop image</div>
<svg class="a" style="left:1288px;top:168px" width="24" height="12" viewBox="0 0 24 12"><text x="1" y="9" font-family="Liberation Sans" font-size="9" fill="#e8ecf0">HPC</text></svg>
<div class="t" style="left:1260.0px;width:80px;top:194px;font-size:10px;line-height:11px;text-align:center;color:#d0d8e0;letter-spacing:-0.3px;">CP-</div>
<div class="a" style="left:1323.5px;top:191px;width:0;height:0;border-left:4.5px solid transparent;border-right:4.5px solid transparent;border-top:6px solid #dfe2e6"></div>
<div class="a" style="left:1336px;top:161px;width:17px;height:66px;background:linear-gradient(90deg,#dadadd,#d6d6da 50%,#dddde0)"></div>
<div class="a" style="left:1339.5px;top:190px;width:0;height:0;border-left:5px solid transparent;border-right:5px solid transparent;border-top:7px solid #c4c4c8"></div>
<svg class="a" style="left:1361px;top:164px" width="26" height="27" viewBox="0 0 26 27"><text x="1" y="25" font-family="Liberation Serif" font-size="33" fill="#1f7bc1">T</text></svg>
<div class="t" style="left:1335.0px;width:80px;top:194px;font-size:10px;line-height:11px;text-align:center;color:#3d7fae;letter-spacing:-0.3px;">Text</div>
<svg class="a" style="left:1403px;top:165px" width="28" height="27" viewBox="0 0 28 27"><path d="M26.5 2 L6 22.5" stroke="#1f7bc1" stroke-width="3"/><path d="M2 26 L5 13 L15 23Z" fill="#1f7bc1"/></svg>
<div class="t" style="left:1377.0px;width:80px;top:194px;font-size:10px;line-height:11px;text-align:center;color:#3d7fae;letter-spacing:-0.3px;">Arrow</div>
<svg class="a" style="left:1448px;top:167px" width="22" height="22" viewBox="0 0 22 22"><rect x="3" y="5" width="16" height="16" fill="none" stroke="#eceef2" stroke-width="1.5"/><path d="M1 4H21M8 1H14" stroke="#eceef2" stroke-width="1.5"/></svg>
<div class="t" style="left:1419.0px;width:80px;top:194px;font-size:10px;line-height:11px;text-align:center;color:#d4dce4;letter-spacing:-0.3px;">Delete</div>
<svg class="a" style="left:1490px;top:167px" width="22" height="22" viewBox="0 0 22 22"><rect x="5" y="3" width="13" height="17" fill="none" stroke="#eceef2" stroke-width="1.5"/></svg>
<div class="t" style="left:1461.0px;width:80px;top:194px;font-size:10px;line-height:11px;text-align:center;color:#d4dce4;letter-spacing:-0.3px;">Copy</div>
<svg class="a" style="left:1532px;top:167px" width="22" height="22" viewBox="0 0 22 22"><rect x="3" y="3" width="14" height="17" fill="none" stroke="#eceef2" stroke-width="1.5"/><rect x="9" y="9" width="10" height="12" fill="none" stroke="#eceef2" stroke-width="1.5"/></svg>
<div class="t" style="left:1503.0px;width:80px;top:194px;font-size:10px;line-height:11px;text-align:center;color:#d4dce4;letter-spacing:-0.3px;">Paste</div>
<div class="a" style="left:1565px;top:161px;width:15px;height:66px;background:linear-gradient(90deg,#dadadd,#d6d6da 50%,#dddde0)"></div>
<div class="a" style="left:1567.5px;top:188px;width:10px;height:1px;background:#555"></div>
<div class="a" style="left:1567.5px;top:190px;width:0;height:0;border-left:5px solid transparent;border-right:5px solid transparent;border-top:7px solid #555"></div>
<div class="a" style="left:323px;top:243px;width:1550px;height:726px;background:linear-gradient(180deg,rgba(120,135,160,.10) 0%,rgba(120,135,160,0) 25%),linear-gradient(90deg,#858287 0%,#838086 1.2%,#8a7d89 5%,#897e8a 18%,#878490 45%,#8a898f 75%,#8b8a8f 100%)"></div>
<div class="a" style="left:1873px;top:243px;width:17px;height:726px;background:#fcfcfd"></div>
<div class="a" style="left:1877px;top:485px;width:11px;height:243px;background:#e6e6ea"></div>
<div class="a" style="left:1877px;top:248.5px;width:0;height:0;border-left:4px solid transparent;border-right:4px solid transparent;border-bottom:6px solid #222"></div>
<div class="a" style="left:1877px;top:957px;width:0;height:0;border-left:4px solid transparent;border-right:4px solid transparent;border-top:6px solid #222"></div>
<div class="a" style="left:323px;top:969px;width:1550px;height:17px;background:#f8f2f8"></div>
<div class="a" style="left:818px;top:971px;width:560px;height:13px;background:#dcdadf"></div>
<div class="a" style="left:328px;top:974px;width:0;height:0;border-top:4px solid transparent;border-bottom:4px solid transparent;border-right:6px solid #222"></div>
<div class="a" style="left:1862px;top:973px;width:0;height:0;border-top:4px solid transparent;border-bottom:4px solid transparent;border-left:6px solid #222"></div>
<div class="a" style="left:422px;top:269px;width:1354px;height:678px;border:2px solid #e8f03c;background:#021203;overflow:hidden">
<div class="a" style="left:0.0px;top:0.0px;width:1350.0px;height:674.0px;background:linear-gradient(180deg,#011505 0%,#041705 25%,#031206 29%,#030e06 60%,#030a05 90%,#020503 100%)"></div>
<div class="a" style="left:0.0px;top:0.0px;width:50.0px;height:674.0px;background:linear-gradient(90deg,rgba(10,30,45,.28),rgba(10,30,40,0))"></div>
<div class="a" style="left:1226.0px;top:0.0px;width:126.0px;height:674.0px;background:linear-gradient(90deg,rgba(0,8,2,0),rgba(0,14,6,.5))"></div>
<div class="a" style="left:0.0px;top:621.0px;width:1350.0px;height:53.0px;background:linear-gradient(180deg,#030c05,#020904 60%,#030a06)"></div>
<div class="a" style="left:178.0px;top:621.0px;width:68.0px;height:52.0px;background:rgba(14,30,26,.35);filter:blur(3px)"></div>
<div class="a" style="left:178.0px;top:197.0px;width:68.0px;height:422.0px;background:linear-gradient(180deg,rgba(26,28,42,0.5),rgba(20,34,36,0.5) 50%,rgba(14,32,24,0.45));filter:blur(3px)"></div>
<div class="a" style="left:255.0px;top:621.0px;width:66.0px;height:52.0px;background:rgba(14,30,26,.35);filter:blur(3px)"></div>
<div class="a" style="left:255.0px;top:197.0px;width:66.0px;height:422.0px;background:linear-gradient(180deg,rgba(26,28,42,0.5),rgba(20,34,36,0.5) 50%,rgba(14,32,24,0.45));filter:blur(3px)"></div>
<div class="a" style="left:332.0px;top:621.0px;width:66.0px;height:52.0px;background:rgba(14,30,26,.35);filter:blur(3px)"></div>
<div class="a" style="left:332.0px;top:197.0px;width:66.0px;height:422.0px;background:linear-gradient(180deg,rgba(26,28,42,0.5),rgba(20,34,36,0.5) 50%,rgba(14,32,24,0.45));filter:blur(3px)"></div>
<div class="a" style="left:410.0px;top:621.0px;width:64.0px;height:52.0px;background:rgba(14,30,26,.35);filter:blur(3px)"></div>
<div class="a" style="left:410.0px;top:197.0px;width:64.0px;height:422.0px;background:linear-gradient(180deg,rgba(26,28,42,0.5),rgba(20,34,36,0.5) 50%,rgba(14,32,24,0.45));filter:blur(3px)"></div>
<div class="a" style="left:488.0px;top:621.0px;width:64.0px;height:52.0px;background:rgba(14,30,26,.35);filter:blur(3px)"></div>
<div class="a" style="left:488.0px;top:197.0px;width:64.0px;height:422.0px;background:linear-gradient(180deg,rgba(26,28,42,0.5),rgba(20,34,36,0.5) 50%,rgba(14,32,24,0.45));filter:blur(3px)"></div>
<div class="a" style="left:642.0px;top:621.0px;width:66.0px;height:52.0px;background:rgba(14,30,26,.35);filter:blur(3px)"></div>
<div class="a" style="left:642.0px;top:197.0px;width:66.0px;height:422.0px;background:linear-gradient(180deg,rgba(26,28,42,0.5),rgba(20,34,36,0.5) 50%,rgba(14,32,24,0.45));filter:blur(3px)"></div>
<div class="a" style="left:721.0px;top:621.0px;width:62.0px;height:52.0px;background:rgba(14,30,26,.35);filter:blur(3px)"></div>
<div class="a" style="left:721.0px;top:197.0px;width:62.0px;height:422.0px;background:linear-gradient(180deg,rgba(26,28,42,0.12),rgba(20,34,36,0.12) 50%,rgba(14,32,24,0.108));filter:blur(3px)"></div>
<div class="a" style="left:796.0px;top:621.0px;width:66.0px;height:52.0px;background:rgba(14,30,26,.35);filter:blur(3px)"></div>
<div class="a" style="left:796.0px;top:197.0px;width:66.0px;height:422.0px;background:linear-gradient(180deg,rgba(26,28,42,0.5),rgba(20,34,36,0.5) 50%,rgba(14,32,24,0.45));filter:blur(3px)"></div>
<div class="a" style="left:874.0px;top:621.0px;width:64.0px;height:52.0px;background:rgba(14,30,26,.35);filter:blur(3px)"></div>
<div class="a" style="left:874.0px;top:197.0px;width:64.0px;height:422.0px;background:linear-gradient(180deg,rgba(26,28,42,0.5),rgba(20,34,36,0.5) 50%,rgba(14,32,24,0.45));filter:blur(3px)"></div>
<div class="a" style="left:950.0px;top:621.0px;width:64.0px;height:52.0px;background:rgba(14,30,26,.35);filter:blur(3px)"></div>
<div class="a" style="left:950.0px;top:197.0px;width:64.0px;height:422.0px;background:linear-gradient(180deg,rgba(26,28,42,0.5),rgba(20,34,36,0.5) 50%,rgba(14,32,24,0.45));filter:blur(3px)"></div>
<div class="a" style="left:1026.0px;top:621.0px;width:68.0px;height:52.0px;background:rgba(14,30,26,.35);filter:blur(3px)"></div>
<div class="a" style="left:1026.0px;top:197.0px;width:68.0px;height:422.0px;background:linear-gradient(180deg,rgba(26,28,42,0.5),rgba(20,34,36,0.5) 50%,rgba(14,32,24,0.45));filter:blur(3px)"></div>
<div class="a" style="left:100.0px;top:197.0px;width:78.0px;height:422.0px;background:rgba(16,30,10,.35);filter:blur(4px)"></div>
<div class="a" style="left:102.0px;top:230.0px;width:74.0px;height:26.0px;background:rgba(20,160,220,0.75);border-radius:13px;filter:blur(5px)"></div>
<div class="a" style="left:107.0px;top:234.0px;width:64.0px;height:18.0px;background:rgba(45,195,245,1.0);border-radius:9px;filter:blur(3px)"></div>
<div class="a" style="left:107.0px;top:394.5px;width:62.0px;height:17.0px;background:rgba(185,160,30,0.9);border-radius:8px;filter:blur(3.2px)"></div>
<div class="a" style="left:109.0px;top:463.5px;width:56.0px;height:9.0px;background:rgba(165,150,40,0.8);border-radius:4px;filter:blur(2.5px)"></div>
<div class="a" style="left:557.0px;top:197.0px;width:80.0px;height:422.0px;background:rgba(16,30,10,.35);filter:blur(4px)"></div>
<div class="a" style="left:559.0px;top:233.0px;width:76.0px;height:26.0px;background:rgba(20,160,220,0.75);border-radius:13px;filter:blur(5px)"></div>
<div class="a" style="left:564.0px;top:237.0px;width:66.0px;height:18.0px;background:rgba(45,195,245,1.0);border-radius:9px;filter:blur(3px)"></div>
<div class="a" style="left:564.0px;top:395.5px;width:64.0px;height:17.0px;background:rgba(185,160,30,0.9);border-radius:8px;filter:blur(3.2px)"></div>
<div class="a" style="left:566.0px;top:465.5px;width:58.0px;height:9.0px;background:rgba(165,150,40,0.8);border-radius:4px;filter:blur(2.5px)"></div>
<div class="a" style="left:1096.0px;top:197.0px;width:78.0px;height:422.0px;background:rgba(16,30,10,.35);filter:blur(4px)"></div>
<div class="a" style="left:1098.0px;top:233.0px;width:74.0px;height:26.0px;background:rgba(20,160,220,0.75);border-radius:13px;filter:blur(5px)"></div>
<div class="a" style="left:1103.0px;top:237.0px;width:64.0px;height:18.0px;background:rgba(45,195,245,1.0);border-radius:9px;filter:blur(3px)"></div>
<div class="a" style="left:1103.0px;top:395.5px;width:62.0px;height:17.0px;background:rgba(185,160,30,0.9);border-radius:8px;filter:blur(3.2px)"></div>
<div class="a" style="left:1105.0px;top:465.5px;width:56.0px;height:9.0px;background:rgba(165,150,40,0.8);border-radius:4px;filter:blur(2.5px)"></div>
<div class="a" style="left:179.0px;top:196.5px;width:66.0px;height:13.0px;background:rgba(150,25,15,0.6174999999999999);border-radius:5px;filter:blur(4.5px)"></div>
<div class="a" style="left:179.0px;top:213.5px;width:66.0px;height:25.0px;background:rgba(170,28,18,0.589);border-radius:5px;filter:blur(4.5px)"></div>
<div class="a" style="left:179.0px;top:259.5px;width:66.0px;height:13.0px;background:rgba(30,85,100,0.475);border-radius:5px;filter:blur(4.5px)"></div>
<div class="a" style="left:179.0px;top:280.5px;width:66.0px;height:15.0px;background:rgba(15,150,190,0.8075);border-radius:5px;filter:blur(4.5px)"></div>
<div class="a" style="left:179.0px;top:321.5px;width:66.0px;height:15.0px;background:rgba(15,150,190,0.6649999999999999);border-radius:5px;filter:blur(4.5px)"></div>
<div class="a" style="left:179.0px;top:352.5px;width:66.0px;height:13.0px;background:rgba(55,100,80,0.33249999999999996);border-radius:5px;filter:blur(4.5px)"></div>
<div class="a" style="left:179.0px;top:379.5px;width:66.0px;height:17.0px;background:rgba(205,165,35,0.8075);border-radius:5px;filter:blur(4.5px)"></div>
<div class="a" style="left:179.0px;top:404.5px;width:66.0px;height:19.0px;background:rgba(22,72,160,0.855);border-radius:5px;filter:blur(4.5px)"></div>
<div class="a" style="left:179.0px;top:429.5px;width:66.0px;height:15.0px;background:rgba(30,85,100,0.57);border-radius:5px;filter:blur(4.5px)"></div>
<div class="a" style="left:179.0px;top:452.5px;width:66.0px;height:13.0px;background:rgba(30,85,100,0.5225);border-radius:5px;filter:blur(4.5px)"></div>
<div class="a" style="left:179.0px;top:482.5px;width:66.0px;height:9.0px;background:rgba(55,100,80,0.38);border-radius:5px;filter:blur(4.5px)"></div>
<div class="a" style="left:179.0px;top:498.0px;width:66.0px;height:8.0px;background:rgba(115,90,30,0.57);border-radius:5px;filter:blur(4.5px)"></div>
<div class="a" style="left:179.0px;top:509.5px;width:66.0px;height:11.0px;background:rgba(55,100,80,0.475);border-radius:5px;filter:blur(4.5px)"></div>
<div class="a" style="left:179.0px;top:534.5px;width:66.0px;height:9.0px;background:rgba(55,100,80,0.33249999999999996);border-radius:5px;filter:blur(4.5px)"></div>
<div class="a" style="left:179.0px;top:560.5px;width:66.0px;height:11.0px;background:rgba(55,100,80,0.33249999999999996);border-radius:5px;filter:blur(4.5px)"></div>
<div class="a" style="left:256.0px;top:197.5px;width:64.0px;height:9.0px;background:rgba(150,30,20,0.475);border-radius:5px;filter:blur(4.5px)"></div>
<div class="a" style="left:256.0px;top:278.5px;width:64.0px;height:17.0px;background:rgba(40,200,240,0.9025);border-radius:5px;filter:blur(4.5px)"></div>
<div class="a" style="left:256.0px;top:301.5px;width:64.0px;height:11.0px;background:rgba(75,115,70,0.38);border-radius:5px;filter:blur(4.5px)"></div>
<div class="a" style="left:256.0px;top:350.5px;width:64.0px;height:17.0px;background:rgba(75,115,70,0.475);border-radius:5px;filter:blur(4.5px)"></div>
<div class="a" style="left:256.0px;top:399.5px;width:64.0px;height:11.0px;background:rgba(75,115,70,0.33249999999999996);border-radius:5px;filter:blur(4.5px)"></div>
<div class="a" style="left:256.0px;top:435.5px;width:64.0px;height:13.0px;background:rgba(75,115,70,0.475);border-radius:5px;filter:blur(4.5px)"></div>
<div class="a" style="left:256.0px;top:451.5px;width:64.0px;height:11.0px;background:rgba(30,85,100,0.57);border-radius:5px;filter:blur(4.5px)"></div>
<div class="a" style="left:256.0px;top:464.5px;width:64.0px;height:11.0px;background:rgba(75,115,70,0.475);border-radius:5px;filter:blur(4.5px)"></div>
<div class="a" style="left:256.0px;top:508.5px;width:64.0px;height:15.0px;background:rgba(75,115,70,0.6649999999999999);border-radius:5px;filter:blur(4.5px)"></div>
<div class="a" style="left:256.0px;top:559.5px;width:64.0px;height:13.0px;background:rgba(75,115,70,0.57);border-radius:5px;filter:blur(4.5px)"></div>
<div class="a" style="left:256.0px;top:579.5px;width:64.0px;height:15.0px;background:rgba(22,72,160,0.76);border-radius:5px;filter:blur(4.5px)"></div>
<div class="a" style="left:256.0px;top:600.5px;width:64.0px;height:11.0px;background:rgba(22,72,160,0.475);border-radius:5px;filter:blur(4.5px)"></div>
<div class="a" style="left:333.0px;top:196.5px;width:64.0px;height:13.0px;background:rgba(150,25,15,0.6174999999999999);border-radius:5px;filter:blur(4.5px)"></div>
<div class="a" style="left:333.0px;top:213.5px;width:64.0px;height:25.0px;background:rgba(170,28,18,0.589);border-radius:5px;filter:blur(4.5px)"></div>
<div class="a" style="left:333.0px;top:280.5px;width:64.0px;height:15.0px;background:rgba(15,150,190,0.5225);border-radius:5px;filter:blur(4.5px)"></div>
<div class="a" style="left:333.0px;top:322.5px;width:64.0px;height:15.0px;background:rgba(15,150,190,0.7124999999999999);border-radius:5px;filter:blur(4.5px)"></div>
<div class="a" style="left:333.0px;top:353.5px;width:64.0px;height:11.0px;background:rgba(55,100,80,0.285);border-radius:5px;filter:blur(4.5px)"></div>
<div class="a" style="left:333.0px;top:379.5px;width:64.0px;height:17.0px;background:rgba(205,165,35,0.8075);border-radius:5px;filter:blur(4.5px)"></div>
<div class="a" style="left:333.0px;top:403.5px;width:64.0px;height:19.0px;background:rgba(22,72,160,0.8075);border-radius:5px;filter:blur(4.5px)"></div>
<div class="a" style="left:333.0px;top:430.5px;width:64.0px;height:13.0px;background:rgba(30,85,100,0.57);border-radius:5px;filter:blur(4.5px)"></div>
<div class="a" style="left:333.0px;top:453.5px;width:64.0px;height:13.0px;background:rgba(15,150,190,0.57);border-radius:5px;filter:blur(4.5px)"></div>
<div class="a" style="left:333.0px;top:482.5px;width:64.0px;height:9.0px;background:rgba(55,100,80,0.38);border-radius:5px;filter:blur(4.5px)"></div>
<div class="a" style="left:333.0px;top:498.0px;width:64.0px;height:8.0px;background:rgba(115,90,30,0.57);border-radius:5px;filter:blur(4.5px)"></div>
<div class="a" style="left:333.0px;top:509.5px;width:64.0px;height:11.0px;background:rgba(55,100,80,0.5225);border-radius:5px;filter:blur(4.5px)"></div>
<div class="a" style="left:333.0px;top:534.5px;width:64.0px;height:9.0px;background:rgba(115,90,30,0.33249999999999996);border-radius:5px;filter:blur(4.5px)"></div>
<div class="a" style="left:333.0px;top:560.5px;width:64.0px;height:11.0px;background:rgba(55,100,80,0.33249999999999996);border-radius:5px;filter:blur(4.5px)"></div>
<div class="a" style="left:411.0px;top:196.5px;width:62.0px;height:13.0px;background:rgba(150,25,15,0.6174999999999999);border-radius:5px;filter:blur(4.5px)"></div>
<div class="a" style="left:411.0px;top:213.5px;width:62.0px;height:25.0px;background:rgba(170,28,18,0.589);border-radius:5px;filter:blur(4.5px)"></div>
<div class="a" style="left:411.0px;top:260.5px;width:62.0px;height:11.0px;background:rgba(30,85,100,0.38);border-radius:5px;filter:blur(4.5px)"></div>
<div class="a" style="left:411.0px;top:280.5px;width:62.0px;height:15.0px;background:rgba(15,150,190,0.8075);border-radius:5px;filter:blur(4.5px)"></div>
<div class="a" style="left:411.0px;top:436.5px;width:62.0px;height:11.0px;background:rgba(30,85,100,0.4275);border-radius:5px;filter:blur(4.5px)"></div>
<div class="a" style="left:411.0px;top:452.5px;width:62.0px;height:15.0px;background:rgba(15,150,190,0.8075);border-radius:5px;filter:blur(4.5px)"></div>
<div class="a" style="left:411.0px;top:482.5px;width:62.0px;height:9.0px;background:rgba(55,100,80,0.33249999999999996);border-radius:5px;filter:blur(4.5px)"></div>
<div class="a" style="left:411.0px;top:509.5px;width:62.0px;height:11.0px;background:rgba(55,100,80,0.4275);border-radius:5px;filter:blur(4.5px)"></div>
<div class="a" style="left:411.0px;top:558.5px;width:62.0px;height:15.0px;background:rgba(75,115,70,0.7124999999999999);border-radius:5px;filter:blur(4.5px)"></div>
<div class="a" style="left:411.0px;top:587.5px;width:62.0px;height:13.0px;background:rgba(75,115,70,0.57);border-radius:5px;filter:blur(4.5px)"></div>
<div class="a" style="left:411.0px;top:604.5px;width:62.0px;height:9.0px;background:rgba(22,72,160,0.475);border-radius:5px;filter:blur(4.5px)"></div>
<div class="a" style="left:489.0px;top:196.5px;width:62.0px;height:13.0px;background:rgba(150,25,15,0.6174999999999999);border-radius:5px;filter:blur(4.5px)"></div>
<div class="a" style="left:489.0px;top:213.5px;width:62.0px;height:25.0px;background:rgba(170,28,18,0.589);border-radius:5px;filter:blur(4.5px)"></div>
<div class="a" style="left:489.0px;top:282.5px;width:62.0px;height:13.0px;background:rgba(15,150,190,0.5225);border-radius:5px;filter:blur(4.5px)"></div>
<div class="a" style="left:489.0px;top:323.5px;width:62.0px;height:15.0px;background:rgba(15,150,190,0.7124999999999999);border-radius:5px;filter:blur(4.5px)"></div>
<div class="a" style="left:489.0px;top:353.5px;width:62.0px;height:11.0px;background:rgba(55,100,80,0.285);border-radius:5px;filter:blur(4.5px)"></div>
<div class="a" style="left:489.0px;top:380.5px;width:62.0px;height:17.0px;background:rgba(205,165,35,0.8075);border-radius:5px;filter:blur(4.5px)"></div>
<div class="a" style="left:489.0px;top:404.5px;width:62.0px;height:19.0px;background:rgba(22,72,160,0.8075);border-radius:5px;filter:blur(4.5px)"></div>
<div class="a" style="left:489.0px;top:432.5px;width:62.0px;height:13.0px;background:rgba(15,150,190,0.5225);border-radius:5px;filter:blur(4.5px)"></div>
<div class="a" style="left:489.0px;top:452.5px;width:62.0px;height:13.0px;background:rgba(15,150,190,0.57);border-radius:5px;filter:blur(4.5px)"></div>
<div class="a" style="left:489.0px;top:482.5px;width:62.0px;height:9.0px;background:rgba(55,100,80,0.38);border-radius:5px;filter:blur(4.5px)"></div>
<div class="a" style="left:489.0px;top:498.0px;width:62.0px;height:8.0px;background:rgba(115,90,30,0.475);border-radius:5px;filter:blur(4.5px)"></div>
<div class="a" style="left:489.0px;top:509.5px;width:62.0px;height:11.0px;background:rgba(55,100,80,0.475);border-radius:5px;filter:blur(4.5px)"></div>
<div class="a" style="left:489.0px;top:534.5px;width:62.0px;height:9.0px;background:rgba(115,90,30,0.33249999999999996);border-radius:5px;filter:blur(4.5px)"></div>
<div class="a" style="left:489.0px;top:560.5px;width:62.0px;height:11.0px;background:rgba(55,100,80,0.38);border-radius:5px;filter:blur(4.5px)"></div>
<div class="a" style="left:643.0px;top:196.5px;width:64.0px;height:13.0px;background:rgba(150,25,15,0.6174999999999999);border-radius:5px;filter:blur(4.5px)"></div>
<div class="a" style="left:643.0px;top:213.5px;width:64.0px;height:25.0px;background:rgba(170,28,18,0.589);border-radius:5px;filter:blur(4.5px)"></div>
<div class="a" style="left:643.0px;top:260.5px;width:64.0px;height:11.0px;background:rgba(30,85,100,0.38);border-radius:5px;filter:blur(4.5px)"></div>
<div class="a" style="left:643.0px;top:281.5px;width:64.0px;height:15.0px;background:rgba(15,150,190,0.6649999999999999);border-radius:5px;filter:blur(4.5px)"></div>
<div class="a" style="left:643.0px;top:323.5px;width:64.0px;height:15.0px;background:rgba(15,150,190,0.7124999999999999);border-radius:5px;filter:blur(4.5px)"></div>
<div class="a" style="left:643.0px;top:353.5px;width:64.0px;height:11.0px;background:rgba(55,100,80,0.285);border-radius:5px;filter:blur(4.5px)"></div>
<div class="a" style="left:643.0px;top:380.5px;width:64.0px;height:17.0px;background:rgba(205,165,35,0.8075);border-radius:5px;filter:blur(4.5px)"></div>
<div class="a" style="left:643.0px;top:406.5px;width:64.0px;height:19.0px;background:rgba(22,72,160,0.855);border-radius:5px;filter:blur(4.5px)"></div>
<div class="a" style="left:643.0px;top:432.5px;width:64.0px;height:13.0px;background:rgba(15,150,190,0.57);border-radius:5px;filter:blur(4.5px)"></div>
<div class="a" style="left:643.0px;top:453.5px;width:64.0px;height:13.0px;background:rgba(15,150,190,0.57);border-radius:5px;filter:blur(4.5px)"></div>
<div class="a" style="left:643.0px;top:482.5px;width:64.0px;height:9.0px;background:rgba(55,100,80,0.38);border-radius:5px;filter:blur(4.5px)"></div>
<div class="a" style="left:643.0px;top:498.0px;width:64.0px;height:8.0px;background:rgba(115,90,30,0.57);border-radius:5px;filter:blur(4.5px)"></div>
<div class="a" style="left:643.0px;top:509.5px;width:64.0px;height:11.0px;background:rgba(55,100,80,0.475);border-radius:5px;filter:blur(4.5px)"></div>
<div class="a" style="left:643.0px;top:534.5px;width:64.0px;height:9.0px;background:rgba(55,100,80,0.33249999999999996);border-radius:5px;filter:blur(4.5px)"></div>
<div class="a" style="left:643.0px;top:560.5px;width:64.0px;height:11.0px;background:rgba(55,100,80,0.38);border-radius:5px;filter:blur(4.5px)"></div>
<div class="a" style="left:643.0px;top:585.5px;width:64.0px;height:11.0px;background:rgba(22,72,160,0.38);border-radius:5px;filter:blur(4.5px)"></div>
<div class="a" style="left:722.0px;top:199.5px;width:60.0px;height:9.0px;background:rgba(150,30,20,0.4275);border-radius:5px;filter:blur(4.5px)"></div>
<div class="a" style="left:722.0px;top:423.5px;width:60.0px;height:11.0px;background:rgba(30,85,100,0.285);border-radius:5px;filter:blur(4.5px)"></div>
<div class="a" style="left:722.0px;top:456.5px;width:60.0px;height:11.0px;background:rgba(30,85,100,0.38);border-radius:5px;filter:blur(4.5px)"></div>
<div class="a" style="left:722.0px;top:487.5px;width:60.0px;height:9.0px;background:rgba(55,100,80,0.2375);border-radius:5px;filter:blur(4.5px)"></div>
<div class="a" style="left:722.0px;top:557.5px;width:60.0px;height:13.0px;background:rgba(55,100,80,0.4275);border-radius:5px;filter:blur(4.5px)"></div>
<div class="a" style="left:722.0px;top:584.5px;width:60.0px;height:13.0px;background:rgba(55,100,80,0.4275);border-radius:5px;filter:blur(4.5px)"></div>
<div class="a" style="left:797.0px;top:198.5px;width:64.0px;height:11.0px;background:rgba(150,30,20,0.57);border-radius:5px;filter:blur(4.5px)"></div>
<div class="a" style="left:797.0px;top:219.5px;width:64.0px;height:11.0px;background:rgba(150,30,20,0.285);border-radius:5px;filter:blur(4.5px)"></div>
<div class="a" style="left:797.0px;top:238.5px;width:64.0px;height:15.0px;background:rgba(15,150,190,0.57);border-radius:5px;filter:blur(4.5px)"></div>
<div class="a" style="left:797.0px;top:278.5px;width:64.0px;height:21.0px;background:rgba(40,200,240,0.95);border-radius:5px;filter:blur(4.5px)"></div>
<div class="a" style="left:797.0px;top:306.5px;width:64.0px;height:11.0px;background:rgba(75,115,70,0.4275);border-radius:5px;filter:blur(4.5px)"></div>
<div class="a" style="left:797.0px;top:353.5px;width:64.0px;height:17.0px;background:rgba(75,115,70,0.6174999999999999);border-radius:5px;filter:blur(4.5px)"></div>
<div class="a" style="left:797.0px;top:403.5px;width:64.0px;height:13.0px;background:rgba(75,115,70,0.475);border-radius:5px;filter:blur(4.5px)"></div>
<div class="a" style="left:797.0px;top:440.5px;width:64.0px;height:15.0px;background:rgba(75,115,70,0.6174999999999999);border-radius:5px;filter:blur(4.5px)"></div>
<div class="a" style="left:797.0px;top:455.5px;width:64.0px;height:13.0px;background:rgba(15,150,190,0.6649999999999999);border-radius:5px;filter:blur(4.5px)"></div>
<div class="a" style="left:797.0px;top:469.5px;width:64.0px;height:11.0px;background:rgba(75,115,70,0.57);border-radius:5px;filter:blur(4.5px)"></div>
<div class="a" style="left:797.0px;top:489.5px;width:64.0px;height:13.0px;background:rgba(22,72,160,0.38);border-radius:5px;filter:blur(4.5px)"></div>
<div class="a" style="left:797.0px;top:513.5px;width:64.0px;height:15.0px;background:rgba(75,115,70,0.6649999999999999);border-radius:5px;filter:blur(4.5px)"></div>
<div class="a" style="left:797.0px;top:562.5px;width:64.0px;height:13.0px;background:rgba(75,115,70,0.57);border-radius:5px;filter:blur(4.5px)"></div>
<div class="a" style="left:797.0px;top:580.5px;width:64.0px;height:17.0px;background:rgba(22,72,160,0.76);border-radius:5px;filter:blur(4.5px)"></div>
<div class="a" style="left:875.0px;top:198.5px;width:62.0px;height:11.0px;background:rgba(150,30,20,0.57);border-radius:5px;filter:blur(4.5px)"></div>
<div class="a" style="left:875.0px;top:223.5px;width:62.0px;height:11.0px;background:rgba(150,30,20,0.285);border-radius:5px;filter:blur(4.5px)"></div>
<div class="a" style="left:875.0px;top:282.5px;width:62.0px;height:11.0px;background:rgba(15,150,190,0.33249999999999996);border-radius:5px;filter:blur(4.5px)"></div>
<div class="a" style="left:875.0px;top:483.5px;width:62.0px;height:7.0px;background:rgba(55,100,80,0.4275);border-radius:5px;filter:blur(4.5px)"></div>
<div class="a" style="left:875.0px;top:556.5px;width:62.0px;height:15.0px;background:rgba(22,72,160,0.57);border-radius:5px;filter:blur(4.5px)"></div>
<div class="a" style="left:875.0px;top:586.5px;width:62.0px;height:15.0px;background:rgba(150,190,120,0.76);border-radius:5px;filter:blur(4.5px)"></div>
<div class="a" style="left:875.0px;top:606.5px;width:62.0px;height:9.0px;background:rgba(15,150,190,0.475);border-radius:5px;filter:blur(4.5px)"></div>
<div class="a" style="left:951.0px;top:196.5px;width:62.0px;height:13.0px;background:rgba(150,25,15,0.6174999999999999);border-radius:5px;filter:blur(4.5px)"></div>
<div class="a" style="left:951.0px;top:220.5px;width:62.0px;height:13.0px;background:rgba(150,30,20,0.38);border-radius:5px;filter:blur(4.5px)"></div>
<div class="a" style="left:951.0px;top:281.5px;width:62.0px;height:15.0px;background:rgba(40,200,240,0.8075);border-radius:5px;filter:blur(4.5px)"></div>
<div class="a" style="left:951.0px;top:439.5px;width:62.0px;height:13.0px;background:rgba(30,85,100,0.475);border-radius:5px;filter:blur(4.5px)"></div>
<div class="a" style="left:951.0px;top:455.5px;width:62.0px;height:13.0px;background:rgba(15,150,190,0.475);border-radius:5px;filter:blur(4.5px)"></div>
<div class="a" style="left:951.0px;top:484.5px;width:62.0px;height:9.0px;background:rgba(75,115,70,0.57);border-radius:5px;filter:blur(4.5px)"></div>
<div class="a" style="left:951.0px;top:502.5px;width:62.0px;height:7.0px;background:rgba(115,90,30,0.57);border-radius:5px;filter:blur(4.5px)"></div>
<div class="a" style="left:951.0px;top:543.5px;width:62.0px;height:11.0px;background:rgba(30,85,100,0.285);border-radius:5px;filter:blur(4.5px)"></div>
<div class="a" style="left:951.0px;top:587.5px;width:62.0px;height:17.0px;background:rgba(150,190,120,0.8075);border-radius:5px;filter:blur(4.5px)"></div>
<div class="a" style="left:951.0px;top:608.5px;width:62.0px;height:9.0px;background:rgba(15,150,190,0.38);border-radius:5px;filter:blur(4.5px)"></div>
<div class="a" style="left:1027.0px;top:196.5px;width:66.0px;height:13.0px;background:rgba(150,25,15,0.6174999999999999);border-radius:5px;filter:blur(4.5px)"></div>
<div class="a" style="left:1027.0px;top:213.5px;width:66.0px;height:25.0px;background:rgba(170,28,18,0.589);border-radius:5px;filter:blur(4.5px)"></div>
<div class="a" style="left:1027.0px;top:263.5px;width:66.0px;height:11.0px;background:rgba(30,85,100,0.38);border-radius:5px;filter:blur(4.5px)"></div>
<div class="a" style="left:1027.0px;top:284.5px;width:66.0px;height:15.0px;background:rgba(15,150,190,0.76);border-radius:5px;filter:blur(4.5px)"></div>
<div class="a" style="left:1027.0px;top:322.5px;width:66.0px;height:15.0px;background:rgba(15,150,190,0.7124999999999999);border-radius:5px;filter:blur(4.5px)"></div>
<div class="a" style="left:1027.0px;top:353.5px;width:66.0px;height:11.0px;background:rgba(55,100,80,0.33249999999999996);border-radius:5px;filter:blur(4.5px)"></div>
<div class="a" style="left:1027.0px;top:380.5px;width:66.0px;height:17.0px;background:rgba(205,165,35,0.8075);border-radius:5px;filter:blur(4.5px)"></div>
<div class="a" style="left:1027.0px;top:406.5px;width:66.0px;height:19.0px;background:rgba(22,72,160,0.855);border-radius:5px;filter:blur(4.5px)"></div>
<div class="a" style="left:1027.0px;top:433.5px;width:66.0px;height:15.0px;background:rgba(15,150,190,0.57);border-radius:5px;filter:blur(4.5px)"></div>
<div class="a" style="left:1027.0px;top:457.5px;width:66.0px;height:13.0px;background:rgba(15,150,190,0.57);border-radius:5px;filter:blur(4.5px)"></div>
<div class="a" style="left:1027.0px;top:482.5px;width:66.0px;height:9.0px;background:rgba(55,100,80,0.38);border-radius:5px;filter:blur(4.5px)"></div>
<div class="a" style="left:1027.0px;top:500.0px;width:66.0px;height:8.0px;background:rgba(115,90,30,0.57);border-radius:5px;filter:blur(4.5px)"></div>
<div class="a" style="left:1027.0px;top:509.5px;width:66.0px;height:11.0px;background:rgba(55,100,80,0.475);border-radius:5px;filter:blur(4.5px)"></div>
<div class="a" style="left:1027.0px;top:534.5px;width:66.0px;height:9.0px;background:rgba(115,90,30,0.33249999999999996);border-radius:5px;filter:blur(4.5px)"></div>
<div class="a" style="left:1027.0px;top:560.5px;width:66.0px;height:11.0px;background:rgba(30,85,100,0.38);border-radius:5px;filter:blur(4.5px)"></div>
<div class="a" style="left:1027.0px;top:585.5px;width:66.0px;height:11.0px;background:rgba(30,85,100,0.33249999999999996);border-radius:5px;filter:blur(4.5px)"></div>
<div class="a" style="left:0.0px;top:196.0px;width:1350.0px;height:2.0px;background:repeating-linear-gradient(90deg,#e4f0a0 0 8.7px,transparent 8.7px 10.7px)"></div>
<div class="a" style="left:0.0px;top:620.0px;width:1350.0px;height:2.0px;background:repeating-linear-gradient(90deg,#e4f0a0 0 8.7px,transparent 8.7px 10.7px)"></div>
<div class="a" style="left:64.0px;top:152.0px;width:2.0px;height:469.0px;background:#f0f23c"></div>
<div class="a" style="left:46px;top:155px;width:0;height:0;border-top:8.5px solid transparent;border-bottom:8.5px solid transparent;border-right:14px solid #f0f23c"></div>
<div class="a" style="left:70px;top:155px;width:0;height:0;border-top:8.5px solid transparent;border-bottom:8.5px solid transparent;border-left:15px solid #f0f23c"></div>
<div class="t" style="left:51px;top:123.5px;font-size:26px;color:#f0f23c;font-family:'Liberation Serif',serif"><i>R</i><span style="font-family:'Liberation Sans',sans-serif;font-size:18px;-webkit-text-stroke:0.4px #f0f23c">F</span></div>
<div class="a" style="left:1282.0px;top:152.0px;width:2.0px;height:469.0px;background:#f0f23c"></div>
<div class="a" style="left:1264px;top:155px;width:0;height:0;border-top:8.5px solid transparent;border-bottom:8.5px solid transparent;border-right:14px solid #f0f23c"></div>
<div class="a" style="left:1288px;top:155px;width:0;height:0;border-top:8.5px solid transparent;border-bottom:8.5px solid transparent;border-left:15px solid #f0f23c"></div>
<div class="t" style="left:1269px;top:123.5px;font-size:26px;color:#f0f23c;font-family:'Liberation Serif',serif"><i>R</i><span style="font-family:'Liberation Sans',sans-serif;font-size:18px;-webkit-text-stroke:0.4px #f0f23c">F</span></div>
<div class="a" style="left:61.0px;top:577.3px;width:9.0px;height:2.0px;background:#f0f23c"></div>
<div class="a" style="left:1279.0px;top:577.3px;width:9.0px;height:2.0px;background:#f0f23c"></div>
<div class="t" style="left:29.5px;top:563.8px;font-size:21px;letter-spacing:-0.6px;color:#f0f23c;-webkit-text-stroke:0.3px #f0f23c">0.1</div>
<div class="t" style="left:1292.5px;top:563.8px;font-size:21px;letter-spacing:-0.6px;color:#f0f23c;-webkit-text-stroke:0.3px #f0f23c">0.1</div>
<div class="a" style="left:61.0px;top:534.9px;width:9.0px;height:2.0px;background:#f0f23c"></div>
<div class="a" style="left:1279.0px;top:534.9px;width:9.0px;height:2.0px;background:#f0f23c"></div>
<div class="t" style="left:29.5px;top:521.4px;font-size:21px;letter-spacing:-0.6px;color:#f0f23c;-webkit-text-stroke:0.3px #f0f23c">0.2</div>
<div class="t" style="left:1292.5px;top:521.4px;font-size:21px;letter-spacing:-0.6px;color:#f0f23c;-webkit-text-stroke:0.3px #f0f23c">0.2</div>
<div class="a" style="left:61.0px;top:492.6px;width:9.0px;height:2.0px;background:#f0f23c"></div>
<div class="a" style="left:1279.0px;top:492.6px;width:9.0px;height:2.0px;background:#f0f23c"></div>
<div class="t" style="left:29.5px;top:479.1px;font-size:21px;letter-spacing:-0.6px;color:#f0f23c;-webkit-text-stroke:0.3px #f0f23c">0.3</div>
<div class="t" style="left:1292.5px;top:479.1px;font-size:21px;letter-spacing:-0.6px;color:#f0f23c;-webkit-text-stroke:0.3px #f0f23c">0.3</div>
<div class="a" style="left:61.0px;top:450.2px;width:9.0px;height:2.0px;background:#f0f23c"></div>
<div class="a" style="left:1279.0px;top:450.2px;width:9.0px;height:2.0px;background:#f0f23c"></div>
<div class="t" style="left:29.5px;top:436.7px;font-size:21px;letter-spacing:-0.6px;color:#f0f23c;-webkit-text-stroke:0.3px #f0f23c">0.4</div>
<div class="t" style="left:1292.5px;top:436.7px;font-size:21px;letter-spacing:-0.6px;color:#f0f23c;-webkit-text-stroke:0.3px #f0f23c">0.4</div>
<div class="a" style="left:61.0px;top:407.9px;width:9.0px;height:2.0px;background:#f0f23c"></div>
<div class="a" style="left:1279.0px;top:407.9px;width:9.0px;height:2.0px;background:#f0f23c"></div>
<div class="t" style="left:29.5px;top:394.4px;font-size:21px;letter-spacing:-0.6px;color:#f0f23c;-webkit-text-stroke:0.3px #f0f23c">0.5</div>
<div class="t" style="left:1292.5px;top:394.4px;font-size:21px;letter-spacing:-0.6px;color:#f0f23c;-webkit-text-stroke:0.3px #f0f23c">0.5</div>
<div class="a" style="left:61.0px;top:365.6px;width:9.0px;height:2.0px;background:#f0f23c"></div>
<div class="a" style="left:1279.0px;top:365.6px;width:9.0px;height:2.0px;background:#f0f23c"></div>
<div class="t" style="left:29.5px;top:352.1px;font-size:21px;letter-spacing:-0.6px;color:#f0f23c;-webkit-text-stroke:0.3px #f0f23c">0.6</div>
<div class="t" style="left:1292.5px;top:352.1px;font-size:21px;letter-spacing:-0.6px;color:#f0f23c;-webkit-text-stroke:0.3px #f0f23c">0.6</div>
<div class="a" style="left:61.0px;top:323.2px;width:9.0px;height:2.0px;background:#f0f23c"></div>
<div class="a" style="left:1279.0px;top:323.2px;width:9.0px;height:2.0px;background:#f0f23c"></div>
<div class="t" style="left:29.5px;top:309.7px;font-size:21px;letter-spacing:-0.6px;color:#f0f23c;-webkit-text-stroke:0.3px #f0f23c">0.7</div>
<div class="t" style="left:1292.5px;top:309.7px;font-size:21px;letter-spacing:-0.6px;color:#f0f23c;-webkit-text-stroke:0.3px #f0f23c">0.7</div>
<div class="a" style="left:61.0px;top:280.9px;width:9.0px;height:2.0px;background:#f0f23c"></div>
<div class="a" style="left:1279.0px;top:280.9px;width:9.0px;height:2.0px;background:#f0f23c"></div>
<div class="t" style="left:29.5px;top:267.4px;font-size:21px;letter-spacing:-0.6px;color:#f0f23c;-webkit-text-stroke:0.3px #f0f23c">0.8</div>
<div class="t" style="left:1292.5px;top:267.4px;font-size:21px;letter-spacing:-0.6px;color:#f0f23c;-webkit-text-stroke:0.3px #f0f23c">0.8</div>
<div class="a" style="left:61.0px;top:238.5px;width:9.0px;height:2.0px;background:#f0f23c"></div>
<div class="a" style="left:1279.0px;top:238.5px;width:9.0px;height:2.0px;background:#f0f23c"></div>
<div class="t" style="left:29.5px;top:225.0px;font-size:21px;letter-spacing:-0.6px;color:#f0f23c;-webkit-text-stroke:0.3px #f0f23c">0.9</div>
<div class="t" style="left:1292.5px;top:225.0px;font-size:21px;letter-spacing:-0.6px;color:#f0f23c;-webkit-text-stroke:0.3px #f0f23c">0.9</div>
<svg class="a" style="left:116px;top:449px" width="40" height="40" viewBox="540 720 40 40"><path d="M544 740H572M557.5 725V754M557.5 740L572.5 726" stroke="#f0f23c" stroke-width="2.2" fill="none"/></svg>
<div class="t" style="left:152px;top:437px;font-size:29px;color:#f0f23c;letter-spacing:-0.8px"><i style="font-family:'Liberation Serif',serif;font-size:28px">R</i><span style="font-size:18px">F</span>: 0.36</div>
</div>
<div class="a" style="left:323px;top:986px;width:1275px;height:44px;border:1px solid #d4d2d8;background:#f0edf2"></div>
<div class="t" style="left:337.2px;top:992.9px;font-size:14px;line-height:1;letter-spacing:-0.14px;color:#1e1e1e;">Author: CAMAG Laboratory</div>
<div class="t" style="left:520.2px;top:992.9px;font-size:14px;line-height:1;letter-spacing:-0.13px;color:#1e1e1e;">Creation date: 17-Apr-2018 12:47:28</div>
<div class="t" style="left:759.4px;top:992.9px;font-size:14px;line-height:1;color:#1e1e1e"><i style="font-family:'Liberation Serif',serif">R</i><span style="font-size:9px">F</span></div>
<div class="t" style="left:777.6px;top:992.9px;font-size:14px;line-height:1;letter-spacing:-0.03px;color:#1e1e1e;">Position: 0.000</div>
<div class="t" style="left:885.1px;top:992.9px;font-size:14px;line-height:1;letter-spacing:-0.03px;color:#1e1e1e;">Position: (-0.5|86.0) mm</div>
<div class="t" style="left:1049.4px;top:992.9px;font-size:14px;line-height:1;letter-spacing:-0.36px;color:#1e1e1e;">RGB: (3|16|24)</div>
<div class="a" style="left:1154px;top:998px;width:8px;height:8px;border-radius:50%;background:#111"></div>
<div class="t" style="left:1177.3px;top:992.9px;font-size:14px;line-height:1;letter-spacing:-0.09px;color:#1e1e1e;">Contrast: 1.0</div>
<div class="t" style="left:1272.2px;top:992.9px;font-size:14px;line-height:1;letter-spacing:-0.18px;color:#1e1e1e;">Exposure: 0.325 s</div>
<div class="t" style="left:1397.2px;top:992.9px;font-size:14px;line-height:1;letter-spacing:-0.18px;color:#1e1e1e;">Camera gain: 1.00</div>
<div class="t" style="left:347.4px;top:1009.8px;font-size:14px;line-height:1;letter-spacing:-0.10px;color:#1e1e1e;">White Balance: (1.00|1.00|1.00)</div>
<div class="a" style="left:1608px;top:1006px;width:14px;height:3.5px;background:#7a7a7e"></div>
<div class="a" style="left:1631px;top:1006px;width:145px;height:2px;background:#8a8a8e"></div>
<div class="a" style="left:1702px;top:998px;width:12px;height:19px;background:#d4d4d8;border-radius:2px"></div>
<svg class="a" style="left:1784px;top:999px" width="16" height="16" viewBox="0 0 16 16"><path d="M8 1V15M1 8H15" stroke="#7a7a7e" stroke-width="3"/></svg>
<div class="t" style="left:1820.8px;top:1001.4px;font-size:14px;line-height:1;letter-spacing:-0.57px;color:#1e1e1e;">178%</div>
<div class="a" style="left:1869px;top:1004px;width:0;height:0;border-left:4.5px solid transparent;border-right:4.5px solid transparent;border-top:7px solid #8a8a8e"></div>
<div class="a" style="left:1819px;top:1015px;width:70px;height:1px;background:#c8c8cc"></div>
<div class="a" style="left:0;top:1050px;width:1920px;height:3px;background:#172a3b"></div>
<div class="t" style="left:9.3px;top:1058.4px;font-size:14px;line-height:1;letter-spacing:-0.07px;color:#fff;">Analysis Equisetum 3 loaded</div>
<svg class="a" style="left:1177px;top:1056px" width="19" height="17" viewBox="0 0 19 17"><path d="M9.5 1L18 16H1Z" fill="#e8a030"/><path d="M3 12H7L8.5 9L10 14L11.5 11H16" fill="none" stroke="#7a4a10" stroke-width="1"/></svg>
<div class="t" style="left:1196.5px;top:1058.4px;font-size:14px;line-height:1;letter-spacing:-0.03px;color:#fff;">Default:</div>
<div class="a" style="left:1245px;top:1054px;width:18px;height:23px;background:#6e7a86"></div>
<div class="t" style="left:1250.0px;top:1058.4px;font-size:14px;line-height:1;letter-spacing:0.00px;color:#fff;">0</div>
<div class="t" style="left:1304.7px;top:1058.4px;font-size:14px;line-height:1;letter-spacing:-0.19px;color:#fff;">User: visionCATSuser</div>
<div class="t" style="left:1484.4px;top:1058.4px;font-size:14px;line-height:1;letter-spacing:-0.17px;color:#fff;">Server: CM414MO-W10.camag.ch</div>
<div class="a" style="left:1700px;top:1060px;width:10px;height:10px;border-radius:50%;background:#18d030"></div>
<div class="t" style="left:1756.6px;top:1058.4px;font-size:14px;line-height:1;letter-spacing:-0.04px;color:#fff;">Used memory: 1188 MB</div>
</body></html>
